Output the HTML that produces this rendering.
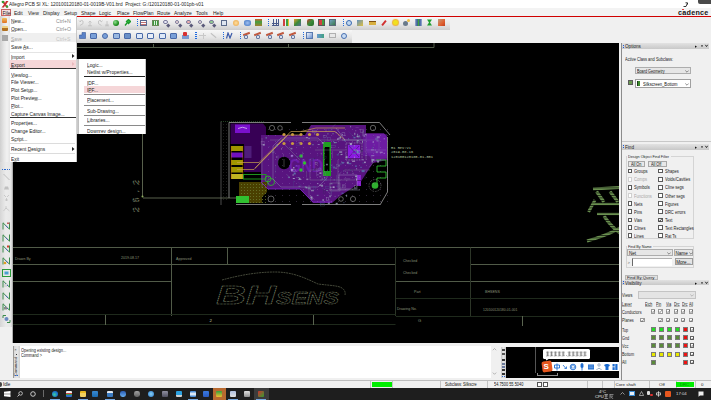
<!DOCTYPE html><html><head><meta charset="utf-8"><style>
*{margin:0;padding:0;box-sizing:border-box}
html,body{width:711px;height:400px;overflow:hidden;background:#f0f0f0;font-family:"Liberation Sans",sans-serif;color:#000;position:relative}
.a{position:absolute}
.t{position:absolute;white-space:nowrap;line-height:1}
svg{display:block}
u{text-decoration-color:rgba(0,0,0,.25);text-decoration-thickness:0.4px;text-underline-offset:0.2px}
.tb{background:linear-gradient(#f7f7f7,#e6e6e6 55%,#cdcdcd)}
</style></head><body><div class="a" style="left:0px;top:0px;width:711px;height:8px;background:#ffffff;"></div><div class="a" style="left:0px;top:8px;width:711px;height:8px;background:#f3f3f3;"></div><div class="a" style="left:0px;top:16px;width:711px;height:1px;background:#d00000;"></div><div class="a tb" style="left:0;top:17px;width:450px;height:12.6px"></div><div class="a tb" style="left:0;top:29.6px;width:352px;height:13px"></div><svg class="a" style="left:1px;top:0px" width="8" height="8" viewBox="0 0 8 8">
<path d="M0.5 1 L3 1 L4 3 L5 1 L7.5 1 L5 4.5 L7.5 7.5 L5 7.5 L4 5.5 L3 7.5 L0.5 7.5 L3 4.5Z" fill="#c83030"/>
<circle cx="2" cy="2" r="1.3" fill="#30a030"/><circle cx="6" cy="6.5" r="1.2" fill="#30a030"/></svg><div class="t" style="left:8.5px;top:1.7px;font-size:5.0px;color:#1a1a1a;transform:scaleX(0.95);transform-origin:0 0">Allegro PCB SI XL: 120100120180-01-0019B-V01.brd&nbsp; Project: G:/120120180-01-001pb-v01</div><div class="a" style="left:1px;top:9px;width:9.5px;height:6.6px;background:#f6dede;border:1px solid #c86464"></div><div class="t" style="left:2.5px;top:10.9px;font-size:5.0px;color:#1a1a1a;">File</div><div class="t" style="left:14px;top:10.9px;font-size:5.0px;color:#1a1a1a;">Edit</div><div class="t" style="left:28px;top:10.9px;font-size:5.0px;color:#1a1a1a;">View</div><div class="t" style="left:43px;top:10.9px;font-size:5.0px;color:#1a1a1a;">Display</div><div class="t" style="left:64px;top:10.9px;font-size:5.0px;color:#1a1a1a;">Setup</div><div class="t" style="left:81px;top:10.9px;font-size:5.0px;color:#1a1a1a;">Shape</div><div class="t" style="left:99px;top:10.9px;font-size:5.0px;color:#1a1a1a;">Logic</div><div class="t" style="left:117px;top:10.9px;font-size:5.0px;color:#1a1a1a;">Place</div><div class="t" style="left:133px;top:10.9px;font-size:5.0px;color:#1a1a1a;">FlowPlan</div><div class="t" style="left:157px;top:10.9px;font-size:5.0px;color:#1a1a1a;">Route</div><div class="t" style="left:174px;top:10.9px;font-size:5.0px;color:#1a1a1a;">Analyze</div><div class="t" style="left:196px;top:10.9px;font-size:5.0px;color:#1a1a1a;">Tools</div><div class="t" style="left:213px;top:10.9px;font-size:5.0px;color:#1a1a1a;">Help</div><div class="t" style="left:678px;top:9.3px;font-size:7.2px;color:#151515;font-weight:bold;letter-spacing:0.25px">cadence</div><div class="a" style="left:682.3px;top:9px;width:1.8px;height:0.9px;background:#e04040;"></div><svg class="a" style="left:683px;top:1.5px" width="5" height="5"><path d="M0.5 4.5 H3 L4.5 1 M2.5 0.8 H4.5 V2.5" stroke="#222" stroke-width="0.9" fill="none"/></svg><div class="a" style="left:698px;top:0px;width:13px;height:3.5px;background:#4a4a4a;border-radius:0 0 0 2px"></div><svg class="a" style="left:78px;top:19px" width="32" height="8" viewBox="0 0 32 8" fill="none" stroke="#bdbdbd" stroke-width="0.8"><path d="M2 6.5 Q6.5 5 5 2 Q3.5 0.5 2 2.5 M1 1.5 L2 2.8 L3.3 1.8"/><path d="M10 6.8 H14 M12 6.8 V3 M10.5 3.5 L12 2 L13.5 3.5"/><path d="M23.5 6.5 Q19 5 20.5 2 Q22 0.5 23.5 2.5 M24.5 1.5 L23.5 2.8 L22.2 1.8"/><path d="M27 6.8 H31 M29 6.8 V2 M27.5 5 L29 6.5 L30.5 5"/></svg><div class="a" style="left:112.5px;top:19.3px;width:7px;height:7px"><div class="a" style="left:0.5px;top:0.5px;width:6px;height:6px;border-radius:50%;background:radial-gradient(circle at 35% 35%,#8fe08f,#1f8f1f 60%,#0d5a0d)"></div></div><div class="a" style="left:123.5px;top:19.3px;width:7px;height:7px"><svg width="7" height="7" viewBox="0 0 7 7"><path d="M1 6.5 L3 4 M2.5 2.5 L4.5 0.5 L6.5 2.5 L4.5 4.5Z" stroke="#1a9a2a" stroke-width="1.3" fill="#2fb83f"/></svg></div><div class="a" style="left:137.0px;top:19px;width:1.4px;height:8px;background:repeating-linear-gradient(#1f6ae0 0 1.1px,transparent 1.1px 2px)"></div><div class="a" style="left:140.0px;top:19.3px;width:7px;height:7px"><div class="a" style="left:0;top:0.5px;width:7px;height:6px;border:1px solid #5a6a90;background:repeating-linear-gradient(#fff 0 1px,#c07070 1px 2px)"></div></div><div class="a" style="left:151.5px;top:19.3px;width:7px;height:7px"><div class="a" style="left:0;top:0.5px;width:7px;height:6px;border:1px solid #6a8a5a;background:repeating-linear-gradient(90deg,#3a9a3a 0 1px,#e0f0e0 1px 2px)"></div></div><div class="a" style="left:162.5px;top:19.3px;width:7px;height:7px"><div class="a" style="left:0.5px;top:0.5px;width:4.5px;height:4.5px;border-radius:50%;border:1.2px solid #7a7a9a;background:#e8e8f8"></div><div class="a" style="left:4.5px;top:4.5px;width:2.5px;height:2.5px;background:#5a5a7a;transform:rotate(45deg)"></div></div><div class="a" style="left:174.0px;top:19.3px;width:7px;height:7px"><div class="a" style="left:0.5px;top:0.5px;width:4.5px;height:4.5px;border-radius:50%;border:1.2px solid #7a7a9a;background:#f8e0e0"></div><div class="a" style="left:4.5px;top:4.5px;width:2.5px;height:2.5px;background:#5a5a7a;transform:rotate(45deg)"></div></div><div class="a" style="left:185.5px;top:19.3px;width:7px;height:7px"><div class="a" style="left:0.5px;top:0.5px;width:4.5px;height:4.5px;border-radius:50%;border:1.2px solid #7a7a9a;background:#f0b0b0"></div><div class="a" style="left:4.5px;top:4.5px;width:2.5px;height:2.5px;background:#5a5a7a;transform:rotate(45deg)"></div></div><div class="a" style="left:197.0px;top:19.3px;width:7px;height:7px"><div class="a" style="left:0.5px;top:0.5px;width:4.5px;height:4.5px;border-radius:50%;border:1.2px solid #7a7a9a;background:#f0e0e0"></div><div class="a" style="left:4.5px;top:4.5px;width:2.5px;height:2.5px;background:#5a5a7a;transform:rotate(45deg)"></div></div><div class="a" style="left:208.5px;top:19.3px;width:7px;height:7px"><div class="a" style="left:0.5px;top:0.5px;width:4.5px;height:4.5px;border-radius:50%;border:1.2px solid #7a7a9a;background:#90d090"></div><div class="a" style="left:4.5px;top:4.5px;width:2.5px;height:2.5px;background:#5a5a7a;transform:rotate(45deg)"></div></div><div class="a" style="left:220.0px;top:19.3px;width:7px;height:7px"><div class="a" style="left:0.5px;top:0.5px;width:6px;height:6px;border:1px solid #5a6a8a;background:#dfe6f0"></div></div><div class="a" style="left:232.0px;top:19.3px;width:7px;height:7px"><div class="a" style="left:0.5px;top:0.5px;width:6px;height:6px;border-radius:50%;background:radial-gradient(#ffe0a0,#e8a040)"></div></div><div class="a" style="left:243.5px;top:19.3px;width:7px;height:7px"><div class="a" style="left:0;top:0.5px;width:7px;height:6px;border-radius:40%;background:radial-gradient(#a0c0f0,#3a70c0)"></div></div><div class="a" style="left:255.0px;top:19.3px;width:7px;height:7px"><div class="a" style="left:0;top:0;width:7px;height:7px;background:linear-gradient(#d06030,#40a040 40%,#a08030)"></div></div><div class="a" style="left:267.7px;top:19px;width:1.4px;height:8px;background:repeating-linear-gradient(#1f6ae0 0 1.1px,transparent 1.1px 2px)"></div><div class="a" style="left:271.5px;top:19.3px;width:7px;height:7px"><div class="a" style="left:0;top:0;width:7px;height:7px;background:repeating-linear-gradient(90deg,transparent 0 1.5px,#4a5a8a 1.5px 2.3px),repeating-linear-gradient(transparent 0 1.5px,#4a5a8a 1.5px 2.3px)"></div></div><div class="a" style="left:282.5px;top:19.3px;width:7px;height:7px"><div class="a" style="left:0.5px;top:0;width:6px;height:7px;background:linear-gradient(90deg,#d04040 0 2px,#f0f0f0 2px 3px,#40a040 3px 5px,#e0c030 5px)"></div></div><div class="a" style="left:294.0px;top:19.3px;width:7px;height:7px"><div class="a" style="left:0;top:0;width:7px;height:7px;background:linear-gradient(135deg,#e0a030,#3a8a3a 50%,#5a6a9a)"></div></div><div class="a" style="left:306.5px;top:19.3px;width:7px;height:7px"><div class="a" style="left:0;top:0;width:7px;height:7px;border-radius:30%;background:linear-gradient(135deg,#c04030,#3a8a3a 50%,#2a6a2a)"></div></div><div class="a" style="left:317.5px;top:19.3px;width:7px;height:7px"><div class="a" style="left:0;top:0;width:7px;height:7px;border:1px solid #555;background:linear-gradient(90deg,#d04040 0 3px,#40a040 3px)"></div></div><div class="a" style="left:329.0px;top:19.3px;width:7px;height:7px"><div class="a" style="left:0;top:0;width:7px;height:7px;border:1px solid #5a6a7a;background:linear-gradient(135deg,#70a0c0,#3a7a4a)"></div></div><div class="a" style="left:342.7px;top:19px;width:1.4px;height:8px;background:repeating-linear-gradient(#1f6ae0 0 1.1px,transparent 1.1px 2px)"></div><div class="a" style="left:345.0px;top:19.3px;width:7px;height:7px"><div class="a" style="left:0.5px;top:0.5px;width:6px;height:6px;border-radius:50%;border:1px solid #3a6ab0;background:#c0d8f0"></div></div><div class="a" style="left:356.5px;top:19.3px;width:7px;height:7px"><div class="a" style="left:0;top:1px;width:6px;height:6px;background:linear-gradient(135deg,#6090c0,#e0c040)"></div></div><div class="a" style="left:368.5px;top:19.3px;width:7px;height:7px"><div class="a" style="left:0;top:2px;width:7px;height:4px;background:#d8b040;border-top:1px solid #805010"></div></div><div class="a" style="left:380.0px;top:19.3px;width:7px;height:7px"><div class="a" style="left:1px;top:3px;width:6px;height:2px;background:#d03030;transform:rotate(-50deg)"></div></div><div class="a" style="left:391.5px;top:19.3px;width:7px;height:7px"><div class="a" style="left:1px;top:1px;width:5px;height:5px;border-radius:50%;background:#f0e020;box-shadow:0 0 1px 1px #f0b030"></div></div><div class="a" style="left:402.5px;top:19.3px;width:7px;height:7px"><div class="a" style="left:0.5px;top:1.5px;width:5px;height:5px;border-radius:50%;background:#6a7a8a"></div><div class="a" style="left:4px;top:0;width:3px;height:3px;background:#f0c040;border-radius:50%"></div></div><div class="a" style="left:414.5px;top:19.3px;width:7px;height:7px"><div class="a" style="left:0;top:0;width:7px;height:7px;background:linear-gradient(90deg,#a0b0d0,#3a5aa0 30%,#40a040 50%,#3a5aa0 70%,#a0b0d0)"></div></div><div class="a" style="left:425.5px;top:19.3px;width:7px;height:7px"><svg width="7" height="7" viewBox="0 0 7 7"><path d="M1 0.5 H6 L4 3.5 L6 6.5 H1 L3 3.5Z" fill="#20a030"/></svg></div><div class="a" style="left:437.5px;top:19.3px;width:7px;height:7px"><div class="a" style="left:0;top:0;width:7px;height:7px;background:linear-gradient(135deg,#c0a080,#e06030 60%,#c04020)"></div></div><div class="a" style="left:78.5px;top:32.3px;width:7px;height:7px"><svg width="7" height="7" viewBox="0 0 7 7"><path d="M0.5 6.5 V3 H3 V0.5 H6.5 V6.5Z" fill="#5a82c8" stroke="#3a5a98" stroke-width="0.6"/></svg></div><div class="a" style="left:89.5px;top:32.3px;width:7px;height:7px"><div class="a" style="left:0;top:0.5px;width:7px;height:6px;border:1px solid #4a6aa8;border-radius:1px;background:#7aa0d8"></div></div><div class="a" style="left:101.0px;top:32.3px;width:7px;height:7px"><div class="a" style="left:0.5px;top:0.5px;width:6px;height:6px;border-radius:50%;background:#7aa0d8;border:1px solid #4a6aa8"></div></div><div class="a" style="left:112.5px;top:32.3px;width:7px;height:7px"><div class="a" style="left:0;top:0.5px;width:7px;height:6px;border:1px solid #4a6aa8;border-radius:1px;background:#9ab8e0"></div></div><div class="a" style="left:124.0px;top:32.3px;width:7px;height:7px"><div class="a" style="left:0;top:0.5px;width:7px;height:6px;border:1px solid #4a6aa8;border-radius:1px;background:#6a90c8"></div></div><div class="a" style="left:135.5px;top:32.3px;width:7px;height:7px"><div class="a" style="left:0;top:0.5px;width:7px;height:6px;border:1px solid #4a6aa8;border-radius:1px;background:#dde8f8"></div></div><div class="a" style="left:147.0px;top:32.3px;width:7px;height:7px"><div class="a" style="left:0;top:0.5px;width:7px;height:6px;border:1px solid #4a6aa8;border-radius:1px;background:#e8eef8"></div></div><div class="a" style="left:159.0px;top:32.3px;width:7px;height:7px"><div class="a" style="left:0;top:0.5px;width:7px;height:6px;border:1px solid #4a6aa8;border-radius:1px;background:#dde8f8"></div></div><div class="a" style="left:170.0px;top:32.3px;width:7px;height:7px"><div class="a" style="left:0;top:0.5px;width:7px;height:6px;border:1px solid #4a6aa8;border-radius:1px;background:#7aa0d8"></div></div><div class="a" style="left:181.5px;top:32.3px;width:7px;height:7px"><div class="a" style="left:0;top:3px;width:7px;height:4px;background:#7a9ad0"></div><div class="a" style="left:1.5px;top:0;width:4px;height:4px;background:#d83030;border-radius:1px"></div></div><div class="a" style="left:195.2px;top:32px;width:1.4px;height:8px;background:repeating-linear-gradient(#1f6ae0 0 1.1px,transparent 1.1px 2px)"></div><div class="a" style="left:198.5px;top:32.3px;width:7px;height:7px"><div class="a" style="left:0;top:3px;width:7px;height:1px;background:#c8c8c8"></div><div class="a" style="left:4px;top:0.5px;width:1px;height:6px;background:#c8c8c8"></div></div><div class="a" style="left:209.5px;top:32.3px;width:7px;height:7px"><div class="a" style="left:0;top:3px;width:7px;height:1px;background:#c0c0c0;transform:rotate(40deg)"></div></div><div class="a" style="left:223.1px;top:32px;width:1.4px;height:8px;background:repeating-linear-gradient(#1f6ae0 0 1.1px,transparent 1.1px 2px)"></div><div class="a" style="left:226.1px;top:32.3px;width:7px;height:7px"><svg width="7" height="7" viewBox="0 0 7 7"><path d="M0.5 6.5 L2 1 L4 6 L6 1" stroke="#3a5aa8" stroke-width="1.2" fill="none"/></svg></div><div class="a" style="left:239.89999999999998px;top:32px;width:1.4px;height:8px;background:repeating-linear-gradient(#1f6ae0 0 1.1px,transparent 1.1px 2px)"></div><div class="a" style="left:242.9px;top:32.3px;width:7px;height:7px"><div class="a" style="left:0;top:0.5px;width:7px;height:2px;background:#c05a40;transform:rotate(-20deg)"></div><div class="a" style="left:1.5px;top:2.5px;width:4px;height:4.5px;border:1px solid #6a7aa0;background:#d8e0f0;border-radius:1px"></div></div><div class="a" style="left:254.2px;top:32.3px;width:7px;height:7px"><div class="a" style="left:0;top:0.5px;width:7px;height:2px;background:#c05a40;transform:rotate(-20deg)"></div><div class="a" style="left:1.5px;top:2.5px;width:4px;height:4.5px;border:1px solid #6a7aa0;background:#d8e0f0;border-radius:1px"></div></div><div class="a" style="left:266.0px;top:32.3px;width:7px;height:7px"><div class="a" style="left:0;top:0.5px;width:7px;height:2px;background:#c05a40;transform:rotate(-20deg)"></div><div class="a" style="left:1.5px;top:2.5px;width:4px;height:4.5px;border:1px solid #6a7aa0;background:#d8e0f0;border-radius:1px"></div></div><div class="a" style="left:277.2px;top:32.3px;width:7px;height:7px"><div class="a" style="left:0;top:0.5px;width:7px;height:2px;background:#c05a40;transform:rotate(-20deg)"></div><div class="a" style="left:1.5px;top:2.5px;width:4px;height:4.5px;border:1px solid #6a7aa0;background:#d8e0f0;border-radius:1px"></div></div><div class="a" style="left:289.0px;top:32.3px;width:7px;height:7px"><div class="a" style="left:0;top:0.5px;width:7px;height:2px;background:#c05a40;transform:rotate(-20deg)"></div><div class="a" style="left:1.5px;top:2.5px;width:4px;height:4.5px;border:1px solid #6a7aa0;background:#d8e0f0;border-radius:1px"></div></div><div class="a" style="left:302.7px;top:32px;width:1.4px;height:8px;background:repeating-linear-gradient(#1f6ae0 0 1.1px,transparent 1.1px 2px)"></div><div class="a" style="left:306.0px;top:32.3px;width:7px;height:7px"><div class="a" style="left:0;top:0;width:7px;height:7px;border:1px solid #5a7ab0;background:linear-gradient(135deg,#f0f4fa,#6a90d0)"></div></div><div class="a" style="left:317.0px;top:32.3px;width:7px;height:7px"><div class="a" style="left:0;top:1.5px;width:7px;height:4px;background:linear-gradient(90deg,#6a9ad0,#40a080)"></div></div><div class="a" style="left:328.5px;top:32.3px;width:7px;height:7px"><div class="a" style="left:0;top:1px;width:7px;height:5px;border:1px solid #b0b0b0;background:#e8e8e8"></div></div><div class="a" style="left:340.0px;top:32.3px;width:7px;height:7px"><div class="a" style="left:0.5px;top:0.5px;width:6px;height:6px;border-radius:50%;border:1px solid #4a70b0;background:#c8dcf4"></div></div><div class="a" style="left:13px;top:43px;width:606px;height:300px;background:#000;"></div><div class="a" style="left:0;top:43px;width:13px;height:284px;background:linear-gradient(90deg,#d6d6d6,#ebebeb 45%,#e8e8e8 80%,#c4c4c4)"></div><div class="a" style="left:12.4px;top:43px;width:0.8px;height:300px;background:#b0b0b0;"></div><div class="a" style="left:2px;top:169px;width:8.5px;height:0.9px;background:repeating-linear-gradient(90deg,#2a6ad0 0 0.9px,transparent 0.9px 1.7px);"></div><svg class="a" style="left:2px;top:173px" width="9" height="40" viewBox="0 0 9 40"><path d="M1.5 1 L7.5 7" stroke="#b8b8b8" stroke-width="0.9"/><path d="M2 16.5 H7 L6 13.5 H3Z" fill="#c0c0c0"/><path d="M2 22 L4 24 M5 24 L7 22 M4.5 25 V28 M3 27 H6" stroke="#c0c0c0" stroke-width="0.8"/><path d="M1.5 38 L4 35 L7.5 38 M4 33 V36" stroke="#c4c4c4" stroke-width="0.8" fill="none"/></svg><div class="a" style="left:2px;top:219.5px;width:8.5px;height:0.9px;background:repeating-linear-gradient(90deg,#2a6ad0 0 0.9px,transparent 0.9px 1.7px);"></div><svg class="a" style="left:2px;top:222px" width="9" height="8" viewBox="0 0 9 8"><path d="M1 7.5 V0.8 L7.5 7.2 V0.5" stroke="#3a8a4a" stroke-width="1" fill="none"/><path d="M3.5 3.5 L6 6" stroke="#4a6ab0" stroke-width="1"/><rect x="5" y="0.5" width="2.5" height="1.5" fill="#c06060"/></svg><svg class="a" style="left:2px;top:233.5px" width="9" height="8" viewBox="0 0 9 8"><path d="M1 7.5 V0.8 L7.5 7.2 V0.5" stroke="#3a8a4a" stroke-width="1" fill="none"/><path d="M3.5 3.5 L6 6" stroke="#4a6ab0" stroke-width="1"/></svg><svg class="a" style="left:2px;top:245.4px" width="9" height="8" viewBox="0 0 9 8"><path d="M1 7.5 V0.8 L7.5 7.2 V0.5" stroke="#3a8a4a" stroke-width="1" fill="none"/><path d="M3.5 3.5 L6 6" stroke="#4a6ab0" stroke-width="1"/><rect x="5" y="0.5" width="2" height="2" fill="#d04030"/></svg><svg class="a" style="left:2px;top:256.6px" width="9" height="8" viewBox="0 0 9 8"><path d="M1 7.5 V0.8 L7.5 7.2 V0.5" stroke="#3a8a4a" stroke-width="1" fill="none"/><path d="M3.5 3.5 L6 6" stroke="#4a6ab0" stroke-width="1"/><circle cx="3" cy="6" r="1.3" fill="#e0a020"/></svg><svg class="a" style="left:2px;top:268.5px" width="9" height="8" viewBox="0 0 9 8"><rect x="0.5" y="0.5" width="8" height="7" fill="none" stroke="#2a9a3a" stroke-width="1"/><rect x="2.5" y="2.5" width="4" height="3" fill="#4aa0d0"/></svg><svg class="a" style="left:2px;top:279.75px" width="9" height="8" viewBox="0 0 9 8"><path d="M1 7.5 V0.8 L7.5 7.2 V0.5" stroke="#3a8a4a" stroke-width="1" fill="none"/><path d="M3.5 3.5 L6 6" stroke="#4a6ab0" stroke-width="1"/><rect x="2" y="4" width="3" height="3" fill="#d8d8d8"/></svg><svg class="a" style="left:2px;top:291.6px" width="9" height="8" viewBox="0 0 9 8"><path d="M1 7.5 V0.8 L7.5 7.2 V0.5" stroke="#3a8a4a" stroke-width="1" fill="none"/><path d="M3.5 3.5 L6 6" stroke="#4a6ab0" stroke-width="1"/></svg><svg class="a" style="left:2px;top:302.9px" width="9" height="8" viewBox="0 0 9 8"><path d="M1 7.5 V0.8 L7.5 7.2 V0.5" stroke="#3a8a4a" stroke-width="1" fill="none"/><path d="M3.5 3.5 L6 6" stroke="#4a6ab0" stroke-width="1"/><rect x="2" y="4" width="3" height="2.5" fill="#8a8a8a"/></svg><svg class="a" style="left:2px;top:314.5px" width="9" height="8" viewBox="0 0 9 8"><path d="M1 0.5 H4 M1 0.5 V3 M8 7.5 H5 M8 7.5 V5" stroke="#3a8a4a" stroke-width="1" fill="none"/><circle cx="4.5" cy="4" r="2" fill="#6a8ac0"/></svg><svg class="a" style="left:13px;top:43px" width="606" height="300" viewBox="13 43 606 300"><defs><pattern id="dots" width="3" height="3" patternUnits="userSpaceOnUse"><rect x="1" y="1" width="0.7" height="0.7" fill="#3a3a3a"/></pattern><pattern id="dots2" width="3" height="3" patternUnits="userSpaceOnUse"><rect x="1" y="1" width="0.9" height="0.9" fill="#6a7a30"/></pattern><pattern id="vias" width="7" height="6" patternUnits="userSpaceOnUse"><rect x="2" y="3" width="0.7" height="0.7" fill="#a080c0" opacity="0.6"/></pattern><pattern id="stripe" width="3" height="2.5" patternUnits="userSpaceOnUse"><rect width="3" height="0.8" fill="#000" opacity="0.75"/></pattern></defs><line x1="13" y1="47.5" x2="434" y2="47.5" stroke="#515b48" stroke-width="1"/><line x1="153.5" y1="44" x2="153.5" y2="47.5" stroke="#515b48" stroke-width="1"/><line x1="288.5" y1="44" x2="288.5" y2="47.5" stroke="#515b48" stroke-width="1"/><line x1="434" y1="43" x2="434" y2="47.5" stroke="#515b48" stroke-width="1"/><line x1="13" y1="247.5" x2="619" y2="247.5" stroke="#515b48" stroke-width="1"/><line x1="13" y1="264.5" x2="395.5" y2="264.5" stroke="#515b48" stroke-width="1"/><line x1="470.5" y1="264.5" x2="619" y2="264.5" stroke="#515b48" stroke-width="1"/><line x1="13" y1="281.5" x2="171.5" y2="281.5" stroke="#515b48" stroke-width="1"/><line x1="396" y1="281.5" x2="619" y2="281.5" stroke="#515b48" stroke-width="1"/><line x1="171.5" y1="247.5" x2="171.5" y2="316" stroke="#515b48" stroke-width="1"/><line x1="227.5" y1="247.5" x2="227.5" y2="264.5" stroke="#515b48" stroke-width="1"/><line x1="395.5" y1="247.5" x2="395.5" y2="316" stroke="#2c3527" stroke-width="1"/><line x1="470.5" y1="247.5" x2="470.5" y2="316" stroke="#2c3527" stroke-width="1"/><line x1="13" y1="314.5" x2="395.5" y2="314.5" stroke="#1f2a1c" stroke-width="1"/><line x1="13" y1="324.5" x2="395.5" y2="324.5" stroke="#1f2a1c" stroke-width="1"/><line x1="396" y1="298.5" x2="619" y2="298.5" stroke="#1f2a1c" stroke-width="1"/><line x1="396" y1="316.5" x2="619" y2="316.5" stroke="#1f2a1c" stroke-width="1"/><line x1="105.5" y1="315" x2="105.5" y2="325" stroke="#5a6450" stroke-width="1"/><line x1="313.5" y1="315" x2="313.5" y2="325" stroke="#5a6450" stroke-width="1"/><line x1="522.5" y1="316" x2="522.5" y2="326" stroke="#5a6450" stroke-width="1"/><line x1="142.5" y1="133" x2="142.5" y2="196.5" stroke="#58604c" stroke-width="1"/><line x1="143" y1="198" x2="240" y2="198" stroke="#58604c" stroke-width="1"/><circle cx="142.5" cy="196.5" r="1" fill="#90b060"/><text x="0" y="0" transform="translate(138.5,212) rotate(-90)" font-family="Liberation Sans" font-size="8.5" fill="none" stroke="#7e8a6c" stroke-width="0.5" stroke-dasharray="2 1" textLength="32" lengthAdjust="spacing">25.2</text><text x="15" y="260" font-family="Liberation Sans" font-size="3.6" fill="#8a9478">Drawn By</text><text x="121" y="258.5" font-family="Liberation Sans" font-size="3.6" fill="#8a9478">2019.08.17</text><text x="176" y="260" font-family="Liberation Sans" font-size="3.6" fill="#8a9478">Approved</text><text x="209.5" y="322" font-family="Liberation Sans" font-size="4.4" fill="#c0c4b0">2</text><text x="403" y="261.5" font-family="Liberation Sans" font-size="3.6" fill="#8a9478">Checked</text><text x="403" y="274" font-family="Liberation Sans" font-size="3.6" fill="#8a9478">Checked</text><text x="414" y="293" font-family="Liberation Sans" font-size="3.6" fill="#8a9478">Part</text><text x="397" y="310" font-family="Liberation Sans" font-size="3.6" fill="#8a9478">Drawing No.</text><text x="485" y="293" font-family="Liberation Sans" font-size="3.6" fill="#8a9478">BHSENS</text><text x="483" y="311" font-family="Liberation Sans" font-size="3.4" fill="#8a9478">120100120180-01-001</text><text x="418" y="322" font-family="Liberation Sans" font-size="4.2" fill="#8a9478">G</text><text x="216" y="304" font-family="Liberation Sans" font-style="italic" font-weight="bold" font-size="26" fill="none" stroke="#7c8468" stroke-width="0.5" stroke-dasharray="1.6 0.5" textLength="60" lengthAdjust="spacingAndGlyphs">BH</text><text x="276" y="304" font-family="Liberation Sans" font-style="italic" font-weight="bold" font-size="16" fill="none" stroke="#7c8468" stroke-width="0.5" stroke-dasharray="1.6 0.5" textLength="63" lengthAdjust="spacingAndGlyphs">SENS</text><path d="M222 280 C240 275 258 272 275 272 C293 272 305 278 318 284 C330 285.5 338 285.5 342 288 Q346 291 345 295" fill="none" stroke="#7c8468" stroke-width="0.55" stroke-dasharray="2 0.7"/><g stroke="#6a9050" fill="none" stroke-linecap="butt"><path d="M593 189 L620 187.5" stroke-width="3"/><path d="M596.5 191.5 L604 202" stroke-width="3.2"/><path d="M610 191.5 L618 202" stroke-width="3.2"/><path d="M592 204 H620" stroke-width="2.4"/><path d="M595 200 L588.5 212" stroke-width="3"/><path d="M597 214 H620" stroke-width="2.4"/><path d="M604 216 C608 222 613 228 620 233" stroke-width="3.2"/><path d="M620 228 C610 234 598 238 587 241" stroke-width="3"/></g><rect x="584" y="186" width="35" height="56" fill="url(#stripe)"/><g stroke="#8a8a8a" stroke-width="0.9" fill="none"><path d="M221 121.5 V205" stroke="#6a6a6a" stroke-width="0.7"/><path d="M229 122.5 V198"/><path d="M229 122.5 H291"/><path d="M302 122.5 H379.5 L390 135"/><path d="M387.5 137 V192 L380 205"/><path d="M236 204.5 H291"/><path d="M302 204.5 H380"/></g><path d="M221 121.5 H264" stroke="#2f5a2f" stroke-width="0.7" stroke-dasharray="1 1"/><rect x="222.5" y="124" width="6" height="78" fill="url(#dots)"/><path d="M230.5 123.5 H263 L266 127 V135 H261 V172 H244 V144 H230.5Z" fill="#370055"/><rect x="235" y="124.5" width="15" height="8.5" fill="#7a10cc"/><path d="M238 128.5 Q242.5 126 247 128.5" stroke="#d8c0f0" stroke-width="0.8" fill="none"/><rect x="231" y="146" width="12" height="5" fill="#a09600"/><rect x="231" y="152.5" width="12" height="5" fill="#7010c0"/><rect x="231" y="160" width="12" height="5" fill="#a09600"/><rect x="231" y="167" width="12" height="5.5" fill="#a09600"/><rect x="231" y="174" width="12" height="5" fill="#c0b420"/><path d="M231.3 146 V179 M242.8 146 V179" stroke="#c06010" stroke-width="0.5"/><rect x="244.5" y="146" width="7" height="12" fill="#5a2a8a" opacity="0.7"/><path d="M261 135 H305 L311 125 H366 V133.5 H384 L387 137 V160 L373 163 L360 183 L340 196 L332 203 H313 L300 189 H268 L261 182Z" fill="#58147f"/><path d="M366 133.5 H384 L387 137 V158 L372 161 L366 150Z" fill="#6a1a9a"/><path d="M239 182 H267 V192 L262 197 V203 H239Z" fill="#4a4000"/><rect x="240" y="184" width="26" height="19" fill="url(#dots2)"/><rect x="236" y="196" width="13" height="7" fill="#30c030"/><rect x="243.5" y="174.5" width="22.5" height="4.5" fill="none" stroke="#20a020" stroke-width="0.9"/><g stroke="#30b030" stroke-width="0.9" fill="none"><circle cx="268" cy="179" r="3"/><circle cx="271" cy="182" r="3.5"/></g><g stroke="#c8a050" stroke-width="0.7" fill="none"><path d="M237 162.5 H259 L283 139 L291 131.5 H335 L345 140"/><path d="M237 169.5 H254 L281 142 L288 135 H300"/><path d="M255 168 L285 138"/><path d="M301 131.5 L316 128 H345"/></g><g fill="#c89a40"><circle cx="284" cy="134.5" r="1.6"/><circle cx="292.5" cy="134.5" r="1.6"/><circle cx="301" cy="134.5" r="1.6"/><circle cx="309.5" cy="134.5" r="1.6"/><circle cx="317.5" cy="134.5" r="1.6"/><circle cx="284" cy="143.5" r="1.6"/><circle cx="292.5" cy="143.5" r="1.6"/><circle cx="301" cy="143.5" r="1.6"/><circle cx="309.5" cy="143.5" r="1.6"/></g><text x="289" y="172" font-family="Liberation Sans" font-weight="bold" font-size="19" fill="#6c1ea8" textLength="34" lengthAdjust="spacingAndGlyphs">GND</text><path d="M281 138 H318 L327 147 V178 L318 187 H281 L273 179 V146Z" fill="none" stroke="#8a7ab0" stroke-width="0.5"/><circle cx="284" cy="163" r="6.2" fill="#000"/><path d="M284 159 V167" stroke="#777" stroke-width="0.5"/><g stroke="#9a9a9a" stroke-width="0.6" fill="none"><circle cx="272" cy="128" r="2.6"/><circle cx="280" cy="128" r="2.3"/><circle cx="373" cy="128" r="2.7"/><circle cx="341" cy="199" r="2.3"/><circle cx="353" cy="199" r="2.6"/><circle cx="271" cy="199" r="3"/></g><rect x="323" y="142" width="8" height="34" fill="#20a020"/><rect x="324.5" y="147" width="5" height="24" fill="#000"/><g fill="#30c030"><circle cx="301" cy="156" r="1.7"/><circle cx="304.5" cy="163" r="1.7"/><circle cx="301" cy="170" r="1.7"/></g><g fill="#a070d0"><circle cx="292" cy="156" r="1.3"/><circle cx="292" cy="170" r="1.3"/></g><rect x="348" y="145" width="12" height="13" fill="#8a1ae0"/><path d="M349 146 L359 157 M359 146 L349 157" stroke="#5a0a90" stroke-width="0.8"/><rect x="346" y="143" width="16" height="17" fill="none" stroke="#9080b0" stroke-width="0.8" stroke-dasharray="0.8 0.8"/><g fill="#8a20d0"><rect x="357" y="175" width="4" height="5"/><rect x="357" y="181" width="4" height="5"/></g><path d="M376 160 H386 V166 H377 V172 H386 V178 H377 V185" stroke="#30c030" stroke-width="0.9" fill="none"/><circle cx="375" cy="185.5" r="3.3" fill="#30b030"/><circle cx="375" cy="185.5" r="6" fill="none" stroke="#c0c0c0" stroke-width="0.5" stroke-dasharray="0.7 1"/><g stroke="#8890a0" stroke-width="0.45" fill="none" opacity="0.8"><path d="M262 138 V188 M270 140 H365 M315 150 H345 M338 160 V190 M344 170 H370 M320 180 H355 M309 185 V198"/><rect x="310" y="170" width="12" height="10"/><rect x="330" y="183" width="10" height="8"/><rect x="365" y="140" width="14" height="12"/><path d="M366 133.5 V160 M300 160 L285 145"/></g><rect x="348.1" y="138.3" width="1" height="1" fill="#5a7ab0" opacity="0.8"/><rect x="335.3" y="167.6" width="1.5" height="1" fill="#9aa0b8" opacity="0.8"/><rect x="354.3" y="132.8" width="1" height="2" fill="#a0b0c0" opacity="0.8"/><rect x="333.3" y="166.5" width="1.5" height="2" fill="#5a7ab0" opacity="0.8"/><rect x="332.6" y="186.4" width="2" height="1.5" fill="#c0c8d8" opacity="0.8"/><rect x="360.3" y="166.8" width="1.5" height="1" fill="#5a7ab0" opacity="0.8"/><rect x="362.0" y="140.8" width="1" height="2" fill="#9aa0b8" opacity="0.8"/><rect x="361.6" y="170.1" width="3" height="2" fill="#5a7ab0" opacity="0.8"/><rect x="353.9" y="149.4" width="3" height="1.5" fill="#7a88a8" opacity="0.8"/><rect x="343.9" y="140.2" width="1.5" height="1" fill="#5a7ab0" opacity="0.8"/><rect x="346.8" y="161.7" width="2" height="2" fill="#a0b0c0" opacity="0.8"/><rect x="346.1" y="194.7" width="1" height="2" fill="#a0b0c0" opacity="0.8"/><rect x="339.2" y="151.3" width="3" height="1.5" fill="#9aa0b8" opacity="0.8"/><rect x="375.8" y="151.1" width="2" height="2" fill="#a0b0c0" opacity="0.8"/><rect x="362.5" y="159.0" width="1" height="1.5" fill="#a0b0c0" opacity="0.8"/><rect x="370.9" y="149.1" width="3" height="1.5" fill="#a0b0c0" opacity="0.8"/><rect x="379.7" y="151.6" width="3" height="1.5" fill="#c0c8d8" opacity="0.8"/><rect x="364.2" y="161.6" width="1.5" height="1.5" fill="#c0c8d8" opacity="0.8"/><rect x="371.3" y="155.1" width="3" height="1" fill="#c0c8d8" opacity="0.8"/><rect x="355.2" y="165.4" width="1.5" height="1.5" fill="#5a7ab0" opacity="0.8"/><rect x="345.6" y="156.2" width="2" height="2" fill="#a0b0c0" opacity="0.8"/><rect x="383.6" y="138.3" width="1.5" height="1" fill="#c0c8d8" opacity="0.8"/><rect x="376.5" y="140.4" width="2" height="1" fill="#c0c8d8" opacity="0.8"/><rect x="353.5" y="153.1" width="2" height="1" fill="#5a7ab0" opacity="0.8"/><rect x="371.4" y="159.1" width="3" height="1.5" fill="#a0b0c0" opacity="0.8"/><rect x="352.1" y="160.7" width="3" height="1" fill="#c0c8d8" opacity="0.8"/><rect x="333.8" y="142.2" width="1.5" height="1" fill="#7a88a8" opacity="0.8"/><rect x="363.6" y="135.0" width="1.5" height="2" fill="#9aa0b8" opacity="0.8"/><rect x="333.9" y="142.1" width="3" height="1" fill="#7a88a8" opacity="0.8"/><rect x="356.6" y="135.8" width="3" height="1.5" fill="#a0b0c0" opacity="0.8"/><rect x="357.1" y="133.8" width="1" height="2" fill="#7a88a8" opacity="0.8"/><rect x="371.5" y="160.5" width="1.5" height="2" fill="#9aa0b8" opacity="0.8"/><rect x="341.5" y="192.7" width="2" height="1" fill="#5a7ab0" opacity="0.8"/><rect x="346.7" y="171.7" width="1" height="2" fill="#7a88a8" opacity="0.8"/><rect x="349.9" y="143.1" width="2" height="2" fill="#c0c8d8" opacity="0.8"/><rect x="372.5" y="141.3" width="1.5" height="1.5" fill="#c0c8d8" opacity="0.8"/><rect x="341.2" y="161.5" width="1" height="1" fill="#7a88a8" opacity="0.8"/><rect x="356.4" y="141.2" width="2" height="1.5" fill="#7a88a8" opacity="0.8"/><rect x="383.5" y="152.8" width="1.5" height="1" fill="#c0c8d8" opacity="0.8"/><rect x="356.3" y="151.0" width="3" height="2" fill="#5a7ab0" opacity="0.8"/><rect x="377.1" y="160.6" width="2" height="2" fill="#9aa0b8" opacity="0.8"/><rect x="376.7" y="136.2" width="3" height="2" fill="#c0c8d8" opacity="0.8"/><rect x="356.8" y="140.1" width="2" height="1" fill="#a0b0c0" opacity="0.8"/><rect x="355.9" y="178.5" width="1" height="2" fill="#c0c8d8" opacity="0.8"/><rect x="339.5" y="136.6" width="1.5" height="2" fill="#a0b0c0" opacity="0.8"/><rect x="375.2" y="137.9" width="3" height="2" fill="#7a88a8" opacity="0.8"/><rect x="338.7" y="165.3" width="1" height="1" fill="#9aa0b8" opacity="0.8"/><rect x="354.3" y="187.3" width="1.5" height="1" fill="#7a88a8" opacity="0.8"/><rect x="341.9" y="162.1" width="2" height="1.5" fill="#5a7ab0" opacity="0.8"/><rect x="353.5" y="136.9" width="2" height="1.5" fill="#5a7ab0" opacity="0.8"/><rect x="337.3" y="138.3" width="1" height="1.5" fill="#c0c8d8" opacity="0.8"/><rect x="338.4" y="137.6" width="1" height="2" fill="#9aa0b8" opacity="0.8"/><rect x="348.3" y="163.2" width="3" height="1" fill="#5a7ab0" opacity="0.8"/><rect x="333.2" y="141.0" width="1" height="1" fill="#5a7ab0" opacity="0.8"/><rect x="294.4" y="172.8" width="1" height="1.5" fill="#7a88a8" opacity="0.7"/><rect x="304.8" y="186.2" width="1.5" height="2" fill="#7a88a8" opacity="0.7"/><rect x="310.4" y="196.5" width="2" height="2" fill="#c0c8d8" opacity="0.7"/><rect x="319.6" y="175.8" width="1" height="1.5" fill="#a0b0c0" opacity="0.7"/><rect x="292.8" y="178.0" width="2" height="1" fill="#c0c8d8" opacity="0.7"/><rect x="326.1" y="190.0" width="2" height="1" fill="#7a88a8" opacity="0.7"/><rect x="322.4" y="199.1" width="1.5" height="2" fill="#9aa0b8" opacity="0.7"/><rect x="329.3" y="195.3" width="1.5" height="2" fill="#a0b0c0" opacity="0.7"/><rect x="329.6" y="183.3" width="3" height="1" fill="#7a88a8" opacity="0.7"/><rect x="293.6" y="172.5" width="2" height="2" fill="#5a7ab0" opacity="0.7"/><rect x="323.9" y="177.1" width="1.5" height="1.5" fill="#7a88a8" opacity="0.7"/><rect x="298.5" y="185.8" width="2" height="1" fill="#7a88a8" opacity="0.7"/><rect x="292.6" y="174.0" width="1" height="2" fill="#9aa0b8" opacity="0.7"/><rect x="317.1" y="174.3" width="1.5" height="1" fill="#7a88a8" opacity="0.7"/><rect x="321.1" y="184.7" width="2" height="2" fill="#a0b0c0" opacity="0.7"/><rect x="325.2" y="179.5" width="1.5" height="1" fill="#5a7ab0" opacity="0.7"/><rect x="311.1" y="198.3" width="1.5" height="1.5" fill="#9aa0b8" opacity="0.7"/><rect x="305.9" y="186.9" width="1.5" height="1.5" fill="#a0b0c0" opacity="0.7"/><rect x="297.5" y="177.0" width="2" height="1" fill="#7a88a8" opacity="0.7"/><rect x="298.4" y="178.9" width="3" height="1" fill="#a0b0c0" opacity="0.7"/><rect x="307.7" y="187.3" width="3" height="2" fill="#7a88a8" opacity="0.7"/><rect x="310.9" y="189.8" width="3" height="1.5" fill="#9aa0b8" opacity="0.7"/><rect x="319.4" y="172.4" width="2" height="1.5" fill="#c0c8d8" opacity="0.7"/><g stroke="#a8a8c8" stroke-width="0.45" fill="none" opacity="0.9"><rect x="339" y="175" width="18" height="14"/><path d="M330 190 H360 M342 140 H366 M336 128 L345 140 M366 150 H386"/></g><rect x="363" y="134" width="24" height="22" fill="#7020b0" opacity="0.45"/><rect x="318.0" y="168.7" width="3" height="2" fill="none" stroke="#9a8ab8" stroke-width="0.4" opacity="0.7"/><rect x="340.4" y="186.9" width="1" height="0.8" fill="#6a78a0" opacity="0.75"/><line x1="328.9" y1="194.4" x2="335.1" y2="188.2" stroke="#4a5a90" stroke-width="0.4" opacity="0.7"/><rect x="343.4" y="173.0" width="0.8" height="0.8" fill="#8c90b0" opacity="0.75"/><rect x="336.6" y="185.7" width="1" height="1.5" fill="#4a5a90" opacity="0.75"/><rect x="290.4" y="147.9" width="2" height="1.5" fill="#8c90b0" opacity="0.75"/><rect x="350.2" y="149.6" width="0.8" height="0.8" fill="#6a78a0" opacity="0.75"/><rect x="332.0" y="133.4" width="2" height="0.8" fill="#6a78a0" opacity="0.75"/><rect x="261.1" y="141.4" width="3" height="3" fill="none" stroke="#9a8ab8" stroke-width="0.4" opacity="0.7"/><rect x="313.9" y="169.2" width="1.5" height="1" fill="#3a2a60" opacity="0.75"/><rect x="272.0" y="150.9" width="2" height="2" fill="none" stroke="#8c90b0" stroke-width="0.4" opacity="0.7"/><rect x="350.1" y="125.9" width="1" height="1.5" fill="#9a8ab8" opacity="0.75"/><rect x="331.5" y="159.9" width="1" height="1" fill="#3a2a60" opacity="0.75"/><rect x="342.1" y="134.1" width="0.8" height="1" fill="#a8b0c8" opacity="0.75"/><rect x="335.7" y="202.8" width="2" height="1.5" fill="#a8b0c8" opacity="0.75"/><rect x="341.9" y="132.8" width="3" height="3" fill="none" stroke="#a8b0c8" stroke-width="0.4" opacity="0.7"/><rect x="365.6" y="155.1" width="1" height="0.8" fill="#a8b0c8" opacity="0.75"/><rect x="336.8" y="154.0" width="2" height="1.5" fill="#4a5a90" opacity="0.75"/><line x1="278.1" y1="155.1" x2="278.1" y2="163.6" stroke="#6a78a0" stroke-width="0.4" opacity="0.7"/><line x1="352.4" y1="137.4" x2="355.3" y2="134.4" stroke="#4a5a90" stroke-width="0.4" opacity="0.7"/><rect x="314.1" y="133.1" width="1" height="1.5" fill="#6a78a0" opacity="0.75"/><rect x="349.8" y="145.0" width="3" height="3" fill="none" stroke="#4a5a90" stroke-width="0.4" opacity="0.7"/><rect x="326.5" y="197.5" width="2" height="3" fill="none" stroke="#a8b0c8" stroke-width="0.4" opacity="0.7"/><line x1="331.5" y1="191.5" x2="331.5" y2="195.8" stroke="#6a78a0" stroke-width="0.4" opacity="0.7"/><rect x="355.4" y="130.4" width="0.8" height="0.8" fill="#a8b0c8" opacity="0.75"/><line x1="283.2" y1="153.8" x2="283.2" y2="157.3" stroke="#a8b0c8" stroke-width="0.4" opacity="0.7"/><line x1="343.8" y1="178.9" x2="350.3" y2="178.9" stroke="#a8b0c8" stroke-width="0.4" opacity="0.7"/><rect x="320.8" y="152.9" width="0.8" height="1.5" fill="#8c90b0" opacity="0.75"/><line x1="341.2" y1="162.6" x2="345.0" y2="162.6" stroke="#6a78a0" stroke-width="0.4" opacity="0.7"/><line x1="353.9" y1="179.9" x2="357.5" y2="176.3" stroke="#6a78a0" stroke-width="0.4" opacity="0.7"/><rect x="313.6" y="186.7" width="2" height="3" fill="none" stroke="#4a5a90" stroke-width="0.4" opacity="0.7"/><rect x="275.6" y="145.1" width="2" height="1.5" fill="#6a78a0" opacity="0.75"/><rect x="348.5" y="160.7" width="0.8" height="1.5" fill="#4a5a90" opacity="0.75"/><line x1="355.5" y1="127.3" x2="358.7" y2="127.3" stroke="#9a8ab8" stroke-width="0.4" opacity="0.7"/><rect x="323.7" y="172.9" width="2" height="3" fill="none" stroke="#6a78a0" stroke-width="0.4" opacity="0.7"/><rect x="298.9" y="177.9" width="1.5" height="1.5" fill="#a8b0c8" opacity="0.75"/><rect x="291.4" y="156.6" width="2" height="0.8" fill="#3a2a60" opacity="0.75"/><line x1="371.9" y1="155.0" x2="371.9" y2="159.2" stroke="#6a78a0" stroke-width="0.4" opacity="0.7"/><rect x="323.6" y="190.3" width="2" height="3" fill="none" stroke="#3a2a60" stroke-width="0.4" opacity="0.7"/><rect x="364.6" y="133.8" width="2" height="1" fill="#a8b0c8" opacity="0.75"/><rect x="339.8" y="163.5" width="2" height="1" fill="#4a5a90" opacity="0.75"/><rect x="350.3" y="169.5" width="0.8" height="1.5" fill="#4a5a90" opacity="0.75"/><rect x="290.9" y="136.0" width="0.8" height="1" fill="#3a2a60" opacity="0.75"/><rect x="341.6" y="153.8" width="1" height="1" fill="#a8b0c8" opacity="0.75"/><line x1="293.3" y1="180.7" x2="293.3" y2="188.0" stroke="#4a5a90" stroke-width="0.4" opacity="0.7"/><line x1="329.0" y1="198.9" x2="329.0" y2="204.2" stroke="#a8b0c8" stroke-width="0.4" opacity="0.7"/><rect x="352.0" y="135.1" width="0.8" height="1" fill="#3a2a60" opacity="0.75"/><line x1="330.3" y1="175.9" x2="330.3" y2="181.7" stroke="#6a78a0" stroke-width="0.4" opacity="0.7"/><rect x="276.6" y="143.9" width="1.5" height="1.5" fill="#8c90b0" opacity="0.75"/><rect x="294.0" y="181.0" width="0.8" height="0.8" fill="#4a5a90" opacity="0.75"/><line x1="316.6" y1="167.9" x2="316.6" y2="176.4" stroke="#9a8ab8" stroke-width="0.4" opacity="0.7"/><line x1="363.0" y1="130.0" x2="363.0" y2="136.2" stroke="#a8b0c8" stroke-width="0.4" opacity="0.7"/><rect x="320.3" y="203.0" width="4" height="3" fill="none" stroke="#4a5a90" stroke-width="0.4" opacity="0.7"/><line x1="297.6" y1="181.8" x2="301.8" y2="186.1" stroke="#4a5a90" stroke-width="0.4" opacity="0.7"/><rect x="300.3" y="154.7" width="2" height="3" fill="none" stroke="#4a5a90" stroke-width="0.4" opacity="0.7"/><rect x="327.1" y="169.7" width="0.8" height="1.5" fill="#4a5a90" opacity="0.75"/><rect x="328.8" y="128.4" width="4" height="2" fill="none" stroke="#4a5a90" stroke-width="0.4" opacity="0.7"/><rect x="322.9" y="178.9" width="2" height="1" fill="#4a5a90" opacity="0.75"/><rect x="311.9" y="144.2" width="2" height="1" fill="#6a78a0" opacity="0.75"/><rect x="327.1" y="133.5" width="1.5" height="0.8" fill="#8c90b0" opacity="0.75"/><rect x="265.5" y="137.1" width="1.5" height="1.5" fill="#6a78a0" opacity="0.75"/><rect x="305.8" y="173.3" width="0.8" height="1.5" fill="#3a2a60" opacity="0.75"/><line x1="339.6" y1="181.0" x2="341.8" y2="178.8" stroke="#9a8ab8" stroke-width="0.4" opacity="0.7"/><line x1="365.0" y1="173.0" x2="365.0" y2="179.2" stroke="#3a2a60" stroke-width="0.4" opacity="0.7"/><line x1="327.7" y1="191.4" x2="330.8" y2="194.5" stroke="#a8b0c8" stroke-width="0.4" opacity="0.7"/><rect x="374.7" y="149.6" width="1" height="0.8" fill="#a8b0c8" opacity="0.75"/><rect x="372.8" y="135.4" width="0.8" height="1" fill="#3a2a60" opacity="0.75"/><rect x="309.9" y="158.9" width="4" height="2" fill="none" stroke="#4a5a90" stroke-width="0.4" opacity="0.7"/><line x1="286.3" y1="174.0" x2="289.2" y2="176.9" stroke="#8c90b0" stroke-width="0.4" opacity="0.7"/><line x1="275.5" y1="164.4" x2="275.5" y2="173.4" stroke="#4a5a90" stroke-width="0.4" opacity="0.7"/><rect x="362.2" y="162.6" width="2" height="0.8" fill="#4a5a90" opacity="0.75"/><rect x="282.7" y="137.3" width="0.8" height="1.5" fill="#3a2a60" opacity="0.75"/><rect x="319.2" y="184.6" width="2" height="1.5" fill="#9a8ab8" opacity="0.75"/><rect x="305.7" y="141.4" width="0.8" height="0.8" fill="#3a2a60" opacity="0.75"/><rect x="354.2" y="156.6" width="0.8" height="1.5" fill="#a8b0c8" opacity="0.75"/><rect x="360.8" y="150.2" width="2" height="1.5" fill="#3a2a60" opacity="0.75"/><rect x="336.6" y="164.3" width="3" height="2" fill="none" stroke="#6a78a0" stroke-width="0.4" opacity="0.7"/><rect x="354.8" y="185.7" width="2" height="3" fill="none" stroke="#9a8ab8" stroke-width="0.4" opacity="0.7"/><rect x="357.7" y="184.7" width="1" height="0.8" fill="#3a2a60" opacity="0.75"/><rect x="361.5" y="148.5" width="0.8" height="0.8" fill="#6a78a0" opacity="0.75"/><rect x="298.7" y="141.9" width="0.8" height="1" fill="#a8b0c8" opacity="0.75"/><rect x="325.9" y="163.8" width="2" height="1.5" fill="#8c90b0" opacity="0.75"/><rect x="354.1" y="145.0" width="1" height="1.5" fill="#8c90b0" opacity="0.75"/><rect x="330.3" y="164.6" width="2" height="3" fill="none" stroke="#4a5a90" stroke-width="0.4" opacity="0.7"/><line x1="363.0" y1="130.9" x2="363.0" y2="136.3" stroke="#8c90b0" stroke-width="0.4" opacity="0.7"/><line x1="368.8" y1="167.3" x2="374.9" y2="161.2" stroke="#9a8ab8" stroke-width="0.4" opacity="0.7"/><rect x="296.8" y="156.1" width="1.5" height="1" fill="#4a5a90" opacity="0.75"/><rect x="343.5" y="168.7" width="1.5" height="0.8" fill="#3a2a60" opacity="0.75"/><rect x="262.8" y="144.1" width="2" height="1.5" fill="#a8b0c8" opacity="0.75"/><line x1="310.1" y1="195.0" x2="314.7" y2="199.6" stroke="#8c90b0" stroke-width="0.4" opacity="0.7"/><rect x="315.1" y="162.3" width="2" height="2" fill="none" stroke="#a8b0c8" stroke-width="0.4" opacity="0.7"/><rect x="320.0" y="201.3" width="4" height="2" fill="none" stroke="#4a5a90" stroke-width="0.4" opacity="0.7"/><rect x="305.9" y="137.1" width="2" height="1" fill="#a8b0c8" opacity="0.75"/><line x1="336.7" y1="174.9" x2="336.7" y2="182.6" stroke="#6a78a0" stroke-width="0.4" opacity="0.7"/><rect x="339.7" y="153.0" width="1" height="1.5" fill="#3a2a60" opacity="0.75"/><rect x="296.1" y="143.7" width="4" height="2" fill="none" stroke="#4a5a90" stroke-width="0.4" opacity="0.7"/><rect x="268.7" y="146.1" width="0.8" height="0.8" fill="#4a5a90" opacity="0.75"/><line x1="289.0" y1="146.7" x2="289.0" y2="150.7" stroke="#3a2a60" stroke-width="0.4" opacity="0.7"/><rect x="340.5" y="154.1" width="1.5" height="1" fill="#a8b0c8" opacity="0.75"/><rect x="323.3" y="135.4" width="3" height="2" fill="none" stroke="#8c90b0" stroke-width="0.4" opacity="0.7"/><rect x="317.0" y="183.3" width="1.5" height="0.8" fill="#a8b0c8" opacity="0.75"/><rect x="343.4" y="202.2" width="1" height="1" fill="#4a5a90" opacity="0.75"/><rect x="343.4" y="170.3" width="0.8" height="1.5" fill="#6a78a0" opacity="0.75"/><rect x="322.1" y="178.5" width="0.8" height="1" fill="#8c90b0" opacity="0.75"/><rect x="287.9" y="176.6" width="2" height="1.5" fill="#6a78a0" opacity="0.75"/><rect x="357.3" y="150.6" width="3" height="3" fill="none" stroke="#a8b0c8" stroke-width="0.4" opacity="0.7"/><rect x="350.4" y="169.4" width="3" height="3" fill="none" stroke="#3a2a60" stroke-width="0.4" opacity="0.7"/><rect x="327.8" y="202.4" width="2" height="1.5" fill="#a8b0c8" opacity="0.75"/><rect x="373.7" y="144.4" width="0.8" height="1" fill="#6a78a0" opacity="0.75"/><line x1="346.3" y1="170.6" x2="350.8" y2="166.1" stroke="#3a2a60" stroke-width="0.4" opacity="0.7"/><line x1="329.1" y1="190.2" x2="331.6" y2="187.8" stroke="#a8b0c8" stroke-width="0.4" opacity="0.7"/><rect x="372.0" y="147.0" width="0.8" height="1.5" fill="#4a5a90" opacity="0.75"/><rect x="281.0" y="148.1" width="0.8" height="1.5" fill="#9a8ab8" opacity="0.75"/><rect x="329.9" y="186.5" width="1.5" height="1.5" fill="#8c90b0" opacity="0.75"/><rect x="274.3" y="149.5" width="1" height="0.8" fill="#3a2a60" opacity="0.75"/><rect x="355.0" y="175.6" width="2" height="1.5" fill="#a8b0c8" opacity="0.75"/><rect x="303.6" y="160.8" width="1" height="1" fill="#6a78a0" opacity="0.75"/><rect x="322.5" y="187.8" width="0.8" height="1" fill="#4a5a90" opacity="0.75"/><rect x="319.5" y="167.2" width="0.8" height="0.8" fill="#6a78a0" opacity="0.75"/><rect x="314.1" y="157.8" width="1" height="1.5" fill="#3a2a60" opacity="0.75"/><rect x="308.3" y="138.1" width="1.5" height="1" fill="#9a8ab8" opacity="0.75"/><rect x="342.6" y="185.5" width="2" height="0.8" fill="#8c90b0" opacity="0.75"/><rect x="334.6" y="195.9" width="1" height="0.8" fill="#8c90b0" opacity="0.75"/><line x1="306.3" y1="170.9" x2="306.3" y2="177.5" stroke="#9a8ab8" stroke-width="0.4" opacity="0.7"/><rect x="316.7" y="194.8" width="2" height="1" fill="#6a78a0" opacity="0.75"/><rect x="322.1" y="156.4" width="4" height="2" fill="none" stroke="#3a2a60" stroke-width="0.4" opacity="0.7"/><rect x="321.8" y="142.2" width="2" height="1.5" fill="#a8b0c8" opacity="0.75"/><rect x="360.2" y="129.5" width="3" height="3" fill="none" stroke="#8c90b0" stroke-width="0.4" opacity="0.7"/><rect x="317.7" y="144.2" width="2" height="0.8" fill="#a8b0c8" opacity="0.75"/><rect x="358.3" y="136.3" width="2" height="3" fill="none" stroke="#4a5a90" stroke-width="0.4" opacity="0.7"/><line x1="326.0" y1="129.1" x2="326.0" y2="132.1" stroke="#a8b0c8" stroke-width="0.4" opacity="0.7"/><rect x="364.6" y="131.4" width="0.8" height="1" fill="#3a2a60" opacity="0.75"/><line x1="348.4" y1="131.5" x2="354.1" y2="137.2" stroke="#4a5a90" stroke-width="0.4" opacity="0.7"/><rect x="263.4" y="139.6" width="0.8" height="1" fill="#3a2a60" opacity="0.75"/><rect x="327.2" y="137.3" width="3" height="3" fill="none" stroke="#6a78a0" stroke-width="0.4" opacity="0.7"/><rect x="312.1" y="168.4" width="4" height="2" fill="none" stroke="#3a2a60" stroke-width="0.4" opacity="0.7"/><rect x="306.3" y="178.6" width="2" height="1.5" fill="#9a8ab8" opacity="0.75"/><rect x="343.4" y="126.0" width="2" height="0.8" fill="#3a2a60" opacity="0.75"/><line x1="374.6" y1="136.9" x2="379.8" y2="142.1" stroke="#4a5a90" stroke-width="0.4" opacity="0.7"/><rect x="356.1" y="168.3" width="1" height="1" fill="#a8b0c8" opacity="0.75"/><rect x="353.2" y="150.7" width="3" height="3" fill="none" stroke="#4a5a90" stroke-width="0.4" opacity="0.7"/><rect x="317.3" y="154.8" width="0.8" height="0.8" fill="#4a5a90" opacity="0.75"/><rect x="346.4" y="180.2" width="0.8" height="1" fill="#9a8ab8" opacity="0.75"/><rect x="335.7" y="132.0" width="0.8" height="1" fill="#a8b0c8" opacity="0.75"/><rect x="312.3" y="130.7" width="4" height="2" fill="none" stroke="#9a8ab8" stroke-width="0.4" opacity="0.7"/><rect x="342.6" y="184.8" width="3" height="3" fill="none" stroke="#9a8ab8" stroke-width="0.4" opacity="0.7"/><rect x="352.6" y="172.8" width="0.8" height="1" fill="#a8b0c8" opacity="0.75"/><line x1="302.7" y1="151.7" x2="302.7" y2="158.0" stroke="#8c90b0" stroke-width="0.4" opacity="0.7"/><rect x="325.2" y="186.5" width="4" height="2" fill="none" stroke="#4a5a90" stroke-width="0.4" opacity="0.7"/><rect x="293.0" y="167.0" width="1.5" height="1.5" fill="#a8b0c8" opacity="0.75"/><line x1="324.1" y1="136.1" x2="324.1" y2="145.0" stroke="#4a5a90" stroke-width="0.4" opacity="0.7"/><line x1="332.5" y1="127.1" x2="335.2" y2="124.4" stroke="#8c90b0" stroke-width="0.4" opacity="0.7"/><rect x="333.6" y="179.4" width="1.5" height="1" fill="#6a78a0" opacity="0.75"/><line x1="372.3" y1="160.3" x2="380.7" y2="160.3" stroke="#a8b0c8" stroke-width="0.4" opacity="0.7"/><rect x="331.6" y="145.6" width="4" height="2" fill="none" stroke="#6a78a0" stroke-width="0.4" opacity="0.7"/><rect x="291.3" y="169.7" width="4" height="2" fill="none" stroke="#a8b0c8" stroke-width="0.4" opacity="0.7"/><line x1="318.2" y1="156.5" x2="320.9" y2="153.8" stroke="#3a2a60" stroke-width="0.4" opacity="0.7"/><line x1="338.5" y1="174.9" x2="341.5" y2="172.0" stroke="#a8b0c8" stroke-width="0.4" opacity="0.7"/><rect x="275.9" y="156.6" width="1.5" height="0.8" fill="#a8b0c8" opacity="0.75"/><line x1="332.6" y1="150.9" x2="332.6" y2="158.2" stroke="#8c90b0" stroke-width="0.4" opacity="0.7"/><path d="M261 182 L268 189 H300 L313 202 H332" fill="none" stroke="#7a22c0" stroke-width="0.9"/><rect x="262" y="125" width="126" height="78" fill="url(#vias)"/><g font-family="Liberation Mono" font-size="3.7" fill="#b8c8a0"><text x="391" y="148.5">R1 Rev:V1</text><text x="391" y="153.2">2019.08.16</text><text x="391" y="158">120100120180-01-001</text></g></svg><div class="a" style="left:619px;top:43px;width:92px;height:338px;background:#f0f0f0;"></div><div class="a" style="left:621px;top:43px;width:1.2px;height:337px;background:#8c8c8c;"></div><div class="a" style="left:622px;top:43.3px;width:87px;height:5.4px;background:linear-gradient(#e2e2e2,#c8c8c8)"></div><div class="a" style="left:622.5px;top:44.5px;width:1.2px;height:3.8px;background:repeating-linear-gradient(#1a5ae0 0 1px,transparent 1px 1.9px);"></div><div class="t" style="left:625px;top:45.3px;font-size:4.6px;color:#222;">Options</div><svg class="a" style="left:692px;top:44.3px" width="18" height="4" viewBox="0 0 18 4"><path d="M3 1.5 L5 2.8 L3 3.8Z" fill="#111"/><path d="M9 1.9 H11" stroke="#111" stroke-width="0.9"/><path d="M13.3 0.8 L14.5 2.6 L15.7 0.8" stroke="#111" stroke-width="0.8" fill="none"/></svg><div class="t" style="left:625px;top:57.8px;font-size:4.6px;color:#222;transform:scaleX(0.87);transform-origin:0 0;">Active Class and Subclass:</div><div class="a" style="left:635px;top:67.2px;width:56px;height:7.2px;background:#e6e6e6;border:0.8px solid #adadad"></div><div class="t" style="left:636.5px;top:69.8px;font-size:4.6px;color:#111;transform:scaleX(0.82);transform-origin:0 0;">Board Geometry</div><svg class="a" style="left:685px;top:69.5px" width="4" height="3"><path d="M0.3 0.5 L2 2.2 L3.7 0.5" stroke="#444" stroke-width="0.6" fill="none"/></svg><div class="a" style="left:628px;top:80px;width:4.5px;height:4.5px;background:#6a9a50;border:0.8px solid #5a5a5a"></div><div class="a" style="left:635px;top:79px;width:56px;height:9px;background:#fff;border:0.8px solid #a0a0a0"></div><div class="a" style="left:637px;top:80.6px;width:3px;height:5.4px;background:#3f8a2e;border-left:0.6px solid #1a3a1a"></div><div class="t" style="left:643px;top:82.6px;font-size:4.6px;color:#111;transform:scaleX(0.9);transform-origin:0 0;">Silkscreen_Bottom</div><svg class="a" style="left:685px;top:82.5px" width="4" height="3"><path d="M0.3 0.5 L2 2.2 L3.7 0.5" stroke="#444" stroke-width="0.6" fill="none"/></svg><div class="a" style="left:622px;top:141.3px;width:89px;height:0.8px;background:#c8c8c8;"></div><div class="a" style="left:622px;top:144.2px;width:87px;height:5.4px;background:linear-gradient(#e2e2e2,#c8c8c8)"></div><div class="a" style="left:622.5px;top:145.39999999999998px;width:1.2px;height:3.8px;background:repeating-linear-gradient(#1a5ae0 0 1px,transparent 1px 1.9px);"></div><div class="t" style="left:625px;top:146.2px;font-size:4.6px;color:#222;">Find</div><svg class="a" style="left:692px;top:145.2px" width="18" height="4" viewBox="0 0 18 4"><path d="M3 1.5 L5 2.8 L3 3.8Z" fill="#111"/><path d="M9 1.9 H11" stroke="#111" stroke-width="0.9"/><path d="M13.3 0.8 L14.5 2.6 L15.7 0.8" stroke="#111" stroke-width="0.8" fill="none"/></svg><div class="a" style="left:625.5px;top:156px;width:68.5px;height:83px;background:transparent;border:0.7px solid #d4d4d4"></div><div class="a" style="left:627px;top:153.5px;width:44px;height:4px;background:#f0f0f0;"></div><div class="t" style="left:628px;top:154.8px;font-size:4.4px;color:#222;transform:scaleX(0.85);transform-origin:0 0;">Design Object Find Filter</div><div class="a" style="left:628px;top:160.8px;width:16.5px;height:5.8px;background:#e8e8e8;border:0.6px solid #a8a8a8"></div><div class="t" style="left:630.5px;top:162.8px;font-size:4.5px;color:#111;transform:scaleX(0.85);transform-origin:0 0;">All On</div><div class="a" style="left:648px;top:160.8px;width:18.5px;height:5.8px;background:#e8e8e8;border:0.6px solid #a8a8a8"></div><div class="t" style="left:650.5px;top:162.8px;font-size:4.5px;color:#111;transform:scaleX(0.85);transform-origin:0 0;">All Off</div><div class="a" style="left:627.6px;top:168.8px;width:4.6px;height:4.6px;background:#fff;border:0.6px solid #5a5a5a"></div><div class="t" style="left:634.3px;top:170.0px;font-size:4.6px;color:#1a1a1a;transform:scaleX(0.9);transform-origin:0 0;">Groups</div><div class="a" style="left:658.2px;top:168.8px;width:4.6px;height:4.6px;background:#fff;border:0.6px solid #5a5a5a"></div><div class="t" style="left:665px;top:170.0px;font-size:4.6px;color:#1a1a1a;transform:scaleX(0.88);transform-origin:0 0;">Shapes</div><div class="a" style="left:627.6px;top:177.20000000000002px;width:4.6px;height:4.6px;background:#fff;border:0.6px solid #d0d0d0"></div><div class="t" style="left:634.3px;top:178.4px;font-size:4.6px;color:#a8a8a8;transform:scaleX(0.9);transform-origin:0 0;">Comps</div><div class="a" style="left:658.2px;top:177.20000000000002px;width:4.6px;height:4.6px;background:#fff;border:0.6px solid #5a5a5a"></div><div class="t" style="left:665px;top:178.4px;font-size:4.6px;color:#1a1a1a;transform:scaleX(0.88);transform-origin:0 0;">Voids/Cavities</div><div class="a" style="left:627.6px;top:185.10000000000002px;width:4.6px;height:4.6px;background:#fff;border:0.6px solid #5a5a5a"></div><div class="t" style="left:634.3px;top:186.3px;font-size:4.6px;color:#1a1a1a;transform:scaleX(0.9);transform-origin:0 0;">Symbols</div><div class="a" style="left:658.2px;top:185.10000000000002px;width:4.6px;height:4.6px;background:#fff;border:0.6px solid #5a5a5a"></div><div class="t" style="left:665px;top:186.3px;font-size:4.6px;color:#1a1a1a;transform:scaleX(0.88);transform-origin:0 0;">Cline segs</div><div class="a" style="left:627.6px;top:193.3px;width:4.6px;height:4.6px;background:#fff;border:0.6px solid #d0d0d0"></div><div class="t" style="left:634.3px;top:194.5px;font-size:4.6px;color:#a8a8a8;transform:scaleX(0.9);transform-origin:0 0;">Functions</div><div class="a" style="left:658.2px;top:193.3px;width:4.6px;height:4.6px;background:#fff;border:0.6px solid #5a5a5a"></div><div class="t" style="left:665px;top:194.5px;font-size:4.6px;color:#1a1a1a;transform:scaleX(0.88);transform-origin:0 0;">Other segs</div><div class="a" style="left:627.6px;top:201.3px;width:4.6px;height:4.6px;background:#fff;border:0.6px solid #5a5a5a"></div><div class="t" style="left:634.3px;top:202.5px;font-size:4.6px;color:#1a1a1a;transform:scaleX(0.9);transform-origin:0 0;">Nets</div><div class="a" style="left:658.2px;top:201.3px;width:4.6px;height:4.6px;background:#fff;border:0.6px solid #5a5a5a"></div><div class="t" style="left:665px;top:202.5px;font-size:4.6px;color:#1a1a1a;transform:scaleX(0.88);transform-origin:0 0;">Figures</div><div class="a" style="left:627.6px;top:209.4px;width:4.6px;height:4.6px;background:#fff;border:0.6px solid #5a5a5a"></div><div class="t" style="left:634.3px;top:210.6px;font-size:4.6px;color:#1a1a1a;transform:scaleX(0.9);transform-origin:0 0;">Pins</div><div class="a" style="left:658.2px;top:209.4px;width:4.6px;height:4.6px;background:#fff;border:0.6px solid #5a5a5a"></div><div class="t" style="left:665px;top:210.6px;font-size:4.6px;color:#1a1a1a;transform:scaleX(0.88);transform-origin:0 0;">DRC errors</div><div class="a" style="left:627.6px;top:217.60000000000002px;width:4.6px;height:4.6px;background:#fff;border:0.6px solid #5a5a5a"></div><div class="t" style="left:634.3px;top:218.8px;font-size:4.6px;color:#1a1a1a;transform:scaleX(0.9);transform-origin:0 0;">Vias</div><div class="a" style="left:658.2px;top:217.60000000000002px;width:4.6px;height:4.6px;background:#fff;border:0.6px solid #5a5a5a"></div><div class="t" style="left:665px;top:218.8px;font-size:4.6px;color:#1a1a1a;transform:scaleX(0.88);transform-origin:0 0;">Text</div><div class="a" style="left:627.6px;top:225.4px;width:4.6px;height:4.6px;background:#fff;border:0.6px solid #5a5a5a"></div><div class="t" style="left:634.3px;top:226.6px;font-size:4.6px;color:#1a1a1a;transform:scaleX(0.9);transform-origin:0 0;">Clines</div><div class="a" style="left:658.2px;top:225.4px;width:4.6px;height:4.6px;background:#fff;border:0.6px solid #5a5a5a"></div><div class="t" style="left:665px;top:226.6px;font-size:4.6px;color:#1a1a1a;transform:scaleX(0.88);transform-origin:0 0;">Text Rectangles</div><div class="a" style="left:627.6px;top:233.3px;width:4.6px;height:4.6px;background:#fff;border:0.6px solid #5a5a5a"></div><div class="t" style="left:634.3px;top:234.5px;font-size:4.6px;color:#1a1a1a;transform:scaleX(0.9);transform-origin:0 0;">Lines</div><div class="a" style="left:658.2px;top:233.3px;width:4.6px;height:4.6px;background:#fff;border:0.6px solid #5a5a5a"></div><div class="t" style="left:665px;top:234.5px;font-size:4.6px;color:#1a1a1a;transform:scaleX(0.88);transform-origin:0 0;">Rat Ts</div><svg class="a" style="left:658.4px;top:217.8px" width="4.4" height="4.4"><path d="M0.8 2.2 L1.9 3.4 L3.8 0.8" stroke="#111" stroke-width="0.7" fill="none"/></svg><div class="a" style="left:625.5px;top:245.5px;width:68.5px;height:22.5px;background:transparent;border:0.7px solid #d4d4d4"></div><div class="a" style="left:627px;top:243.5px;width:26px;height:4px;background:#f0f0f0;"></div><div class="t" style="left:628px;top:244.6px;font-size:4.4px;color:#222;transform:scaleX(0.85);transform-origin:0 0;">Find By Name</div><div class="a" style="left:627px;top:249.4px;width:45.5px;height:7px;background:#e6e6e6;border:0.7px solid #adadad"></div><div class="t" style="left:629px;top:251.9px;font-size:4.6px;color:#111;">Net</div><svg class="a" style="left:667px;top:251.8px" width="4" height="3"><path d="M0.3 0.5 L2 2.2 L3.7 0.5" stroke="#444" stroke-width="0.6" fill="none"/></svg><div class="a" style="left:674px;top:249.4px;width:19px;height:7px;background:#e6e6e6;border:0.7px solid #adadad"></div><div class="t" style="left:675.5px;top:251.9px;font-size:4.6px;color:#111;">Name</div><svg class="a" style="left:688.5px;top:251.8px" width="4" height="3"><path d="M0.3 0.5 L2 2.2 L3.7 0.5" stroke="#444" stroke-width="0.6" fill="none"/></svg><div class="t" style="left:627.5px;top:260.5px;font-size:4px;color:#555;">&gt;</div><div class="a" style="left:631.8px;top:258px;width:40.5px;height:7.5px;background:#fff;border-left:1px solid #6a6a6a;border-top:0.7px solid #b0b0b0"></div><div class="a" style="left:674.5px;top:258px;width:18px;height:7px;background:#e4e4e4;border:0.7px solid #9a9a9a"></div><div class="t" style="left:676.2px;top:260.5px;font-size:4.6px;color:#111;">More...</div><div class="a" style="left:625px;top:274.5px;width:33px;height:5px;background:#e0e0e0;border:0.7px solid #b8b8b8"></div><div class="t" style="left:627px;top:276.0px;font-size:4.3px;color:#222;">Find By Query</div><div class="a" style="left:622px;top:279.6px;width:87px;height:5.4px;background:linear-gradient(#e2e2e2,#c8c8c8)"></div><div class="a" style="left:622.5px;top:280.8px;width:1.2px;height:3.8px;background:repeating-linear-gradient(#1a5ae0 0 1px,transparent 1px 1.9px);"></div><div class="t" style="left:625px;top:281.6px;font-size:4.6px;color:#222;">Visibility</div><svg class="a" style="left:692px;top:280.6px" width="18" height="4" viewBox="0 0 18 4"><path d="M3 1.5 L5 2.8 L3 3.8Z" fill="#111"/><path d="M9 1.9 H11" stroke="#111" stroke-width="0.9"/><path d="M13.3 0.8 L14.5 2.6 L15.7 0.8" stroke="#111" stroke-width="0.8" fill="none"/></svg><div class="t" style="left:622.3px;top:294.3px;font-size:4.6px;color:#222;transform:scaleX(0.85);transform-origin:0 0;">Views</div><div class="a" style="left:638px;top:291.3px;width:58px;height:7.8px;background:#e4e4e4;border:0.7px solid #c4c4c4"></div><svg class="a" style="left:690px;top:294px" width="4" height="3"><path d="M0.3 0.5 L2 2.2 L3.7 0.5" stroke="#999" stroke-width="0.6" fill="none"/></svg><div class="t" style="left:622.3px;top:302.6px;font-size:4.6px;color:#222;transform:scaleX(0.85);transform-origin:0 0;"><u>Layer</u></div><div class="t" style="left:645px;top:302.6px;font-size:4.5px;color:#222;transform:scaleX(0.8);transform-origin:0 0;"><u>Etch</u></div><div class="t" style="left:656px;top:302.6px;font-size:4.5px;color:#222;transform:scaleX(0.8);transform-origin:0 0;"><u>Pin</u></div><div class="t" style="left:666px;top:302.6px;font-size:4.5px;color:#222;transform:scaleX(0.8);transform-origin:0 0;"><u>Via</u></div><div class="t" style="left:674px;top:302.6px;font-size:4.5px;color:#222;transform:scaleX(0.8);transform-origin:0 0;"><u>Drc</u></div><div class="t" style="left:682px;top:302.6px;font-size:4.5px;color:#222;transform:scaleX(0.8);transform-origin:0 0;"><u>Drc</u></div><div class="t" style="left:689px;top:302.6px;font-size:4.5px;color:#222;transform:scaleX(0.8);transform-origin:0 0;"><u>All</u></div><div class="t" style="left:622.3px;top:310.6px;font-size:4.5px;color:#222;transform:scaleX(0.85);transform-origin:0 0;">Conductors</div><div class="t" style="left:622.3px;top:319.0px;font-size:4.5px;color:#222;transform:scaleX(0.85);transform-origin:0 0;">Planes</div><div class="a" style="left:650.7px;top:309.3px;width:4.8px;height:4.8px;background:#fff;border:0.6px solid #9a9a9a"></div><svg class="a" style="left:650.7px;top:309.3px" width="4.8" height="4.8" viewBox="0 0 4.8 4.8"><path d="M1 2.5 L2 3.6 L3.9 1.1" stroke="#333" stroke-width="0.55" fill="none"/></svg><div class="a" style="left:658.2px;top:309.3px;width:4.8px;height:4.8px;background:#fff;border:0.6px solid #9a9a9a"></div><svg class="a" style="left:658.2px;top:309.3px" width="4.8" height="4.8" viewBox="0 0 4.8 4.8"><path d="M1 2.5 L2 3.6 L3.9 1.1" stroke="#333" stroke-width="0.55" fill="none"/></svg><div class="a" style="left:665.7px;top:309.3px;width:4.8px;height:4.8px;background:#fff;border:0.6px solid #9a9a9a"></div><svg class="a" style="left:665.7px;top:309.3px" width="4.8" height="4.8" viewBox="0 0 4.8 4.8"><path d="M1 2.5 L2 3.6 L3.9 1.1" stroke="#333" stroke-width="0.55" fill="none"/></svg><div class="a" style="left:673.7px;top:309.3px;width:4.8px;height:4.8px;background:#fff;border:0.6px solid #9a9a9a"></div><svg class="a" style="left:673.7px;top:309.3px" width="4.8" height="4.8" viewBox="0 0 4.8 4.8"><path d="M1 2.5 L2 3.6 L3.9 1.1" stroke="#333" stroke-width="0.55" fill="none"/></svg><div class="a" style="left:680.7px;top:309.3px;width:4.8px;height:4.8px;background:#fff;border:0.6px solid #9a9a9a"></div><svg class="a" style="left:680.7px;top:309.3px" width="4.8" height="4.8" viewBox="0 0 4.8 4.8"><path d="M1 2.5 L2 3.6 L3.9 1.1" stroke="#333" stroke-width="0.55" fill="none"/></svg><div class="a" style="left:688.7px;top:309.3px;width:4.8px;height:4.8px;background:#fff;border:0.6px solid #9a9a9a"></div><svg class="a" style="left:688.7px;top:309.3px" width="4.8" height="4.8" viewBox="0 0 4.8 4.8"><path d="M1 2.5 L2 3.6 L3.9 1.1" stroke="#333" stroke-width="0.55" fill="none"/></svg><div class="a" style="left:640.2px;top:317.7px;width:4.8px;height:4.8px;background:#fff;border:0.6px solid #9a9a9a"></div><svg class="a" style="left:640.2px;top:317.7px" width="4.8" height="4.8" viewBox="0 0 4.8 4.8"><path d="M1 2.5 L2 3.6 L3.9 1.1" stroke="#333" stroke-width="0.55" fill="none"/></svg><div class="a" style="left:658.2px;top:317.7px;width:4.8px;height:4.8px;background:#fff;border:0.6px solid #9a9a9a"></div><svg class="a" style="left:658.2px;top:317.7px" width="4.8" height="4.8" viewBox="0 0 4.8 4.8"><path d="M1 2.5 L2 3.6 L3.9 1.1" stroke="#333" stroke-width="0.55" fill="none"/></svg><div class="a" style="left:665.7px;top:317.7px;width:4.8px;height:4.8px;background:#fff;border:0.6px solid #9a9a9a"></div><svg class="a" style="left:665.7px;top:317.7px" width="4.8" height="4.8" viewBox="0 0 4.8 4.8"><path d="M1 2.5 L2 3.6 L3.9 1.1" stroke="#333" stroke-width="0.55" fill="none"/></svg><div class="a" style="left:673.7px;top:317.7px;width:4.8px;height:4.8px;background:#fff;border:0.6px solid #9a9a9a"></div><svg class="a" style="left:673.7px;top:317.7px" width="4.8" height="4.8" viewBox="0 0 4.8 4.8"><path d="M1 2.5 L2 3.6 L3.9 1.1" stroke="#333" stroke-width="0.55" fill="none"/></svg><div class="a" style="left:680.7px;top:317.7px;width:4.8px;height:4.8px;background:#fff;border:0.6px solid #9a9a9a"></div><svg class="a" style="left:680.7px;top:317.7px" width="4.8" height="4.8" viewBox="0 0 4.8 4.8"><path d="M1 2.5 L2 3.6 L3.9 1.1" stroke="#333" stroke-width="0.55" fill="none"/></svg><div class="a" style="left:688.7px;top:317.7px;width:4.8px;height:4.8px;background:#fff;border:0.6px solid #9a9a9a"></div><svg class="a" style="left:688.7px;top:317.7px" width="4.8" height="4.8" viewBox="0 0 4.8 4.8"><path d="M1 2.5 L2 3.6 L3.9 1.1" stroke="#333" stroke-width="0.55" fill="none"/></svg><div class="t" style="left:622.3px;top:328.5px;font-size:4.5px;color:#222;transform:scaleX(0.85);transform-origin:0 0;">Top</div><div class="a" style="left:650.5px;top:327.0px;width:5px;height:5px;background:#22dd22;border:0.7px solid #7a7a7a"></div><div class="a" style="left:658.5px;top:327.0px;width:5px;height:5px;background:#22dd22;border:0.7px solid #7a7a7a"></div><div class="a" style="left:666.5px;top:327.0px;width:5px;height:5px;background:#22dd22;border:0.7px solid #7a7a7a"></div><div class="a" style="left:674.5px;top:327.0px;width:5px;height:5px;background:#22dd22;border:0.7px solid #7a7a7a"></div><div class="a" style="left:682.5px;top:327.0px;width:5px;height:5px;background:#ee1111;border:0.7px solid #7a7a7a"></div><div class="a" style="left:689.7px;top:327.2px;width:4.8px;height:4.8px;background:#fff;border:0.6px solid #666"></div><svg class="a" style="left:689.7px;top:327.2px" width="4.8" height="4.8" viewBox="0 0 4.8 4.8"><path d="M1 2.5 L2 3.6 L3.9 1.1" stroke="#333" stroke-width="0.55" fill="none"/></svg><div class="t" style="left:622.3px;top:336.8px;font-size:4.5px;color:#222;transform:scaleX(0.85);transform-origin:0 0;">Gnd</div><div class="a" style="left:650.5px;top:335.3px;width:5px;height:5px;background:#5a8a3a;border:0.7px solid #7a7a7a"></div><div class="a" style="left:658.5px;top:335.3px;width:5px;height:5px;background:#5a8a3a;border:0.7px solid #7a7a7a"></div><div class="a" style="left:666.5px;top:335.3px;width:5px;height:5px;background:#5a8a3a;border:0.7px solid #7a7a7a"></div><div class="a" style="left:674.5px;top:335.3px;width:5px;height:5px;background:#5a8a3a;border:0.7px solid #7a7a7a"></div><div class="a" style="left:682.5px;top:335.3px;width:5px;height:5px;background:#ee1111;border:0.7px solid #7a7a7a"></div><div class="a" style="left:689.7px;top:335.5px;width:4.8px;height:4.8px;background:#fff;border:0.6px solid #666"></div><svg class="a" style="left:689.7px;top:335.5px" width="4.8" height="4.8" viewBox="0 0 4.8 4.8"><path d="M1 2.5 L2 3.6 L3.9 1.1" stroke="#333" stroke-width="0.55" fill="none"/></svg><div class="t" style="left:622.3px;top:344.6px;font-size:4.5px;color:#222;transform:scaleX(0.85);transform-origin:0 0;">Vcc</div><div class="a" style="left:650.5px;top:343.1px;width:5px;height:5px;background:#5a8a3a;border:0.7px solid #7a7a7a"></div><div class="a" style="left:658.5px;top:343.1px;width:5px;height:5px;background:#5a8a3a;border:0.7px solid #7a7a7a"></div><div class="a" style="left:666.5px;top:343.1px;width:5px;height:5px;background:#5a8a3a;border:0.7px solid #7a7a7a"></div><div class="a" style="left:674.5px;top:343.1px;width:5px;height:5px;background:#5a8a3a;border:0.7px solid #7a7a7a"></div><div class="a" style="left:682.5px;top:343.1px;width:5px;height:5px;background:#ee1111;border:0.7px solid #7a7a7a"></div><div class="a" style="left:689.7px;top:343.3px;width:4.8px;height:4.8px;background:#fff;border:0.6px solid #666"></div><svg class="a" style="left:689.7px;top:343.3px" width="4.8" height="4.8" viewBox="0 0 4.8 4.8"><path d="M1 2.5 L2 3.6 L3.9 1.1" stroke="#333" stroke-width="0.55" fill="none"/></svg><div class="t" style="left:622.3px;top:353.0px;font-size:4.5px;color:#222;transform:scaleX(0.85);transform-origin:0 0;">Bottom</div><div class="a" style="left:650.5px;top:351.5px;width:5px;height:5px;background:#e8e800;border:0.7px solid #7a7a7a"></div><div class="a" style="left:658.5px;top:351.5px;width:5px;height:5px;background:#e8e800;border:0.7px solid #7a7a7a"></div><div class="a" style="left:666.5px;top:351.5px;width:5px;height:5px;background:#e8e800;border:0.7px solid #7a7a7a"></div><div class="a" style="left:674.5px;top:351.5px;width:5px;height:5px;background:#e8e800;border:0.7px solid #7a7a7a"></div><div class="a" style="left:682.5px;top:351.5px;width:5px;height:5px;background:#ee1111;border:0.7px solid #7a7a7a"></div><div class="a" style="left:689.7px;top:351.7px;width:4.8px;height:4.8px;background:#fff;border:0.6px solid #666"></div><svg class="a" style="left:689.7px;top:351.7px" width="4.8" height="4.8" viewBox="0 0 4.8 4.8"><path d="M1 2.5 L2 3.6 L3.9 1.1" stroke="#333" stroke-width="0.55" fill="none"/></svg><div class="t" style="left:622.3px;top:361.0px;font-size:4.5px;color:#222;transform:scaleX(0.85);transform-origin:0 0;">All</div><div class="a" style="left:650.5px;top:359.5px;width:5px;height:5px;background:#5a8a3a;border:0.7px solid #7a7a7a"></div><div class="a" style="left:682.5px;top:359.5px;width:5px;height:5px;background:#ee1111;border:0.7px solid #7a7a7a"></div><div class="a" style="left:689.7px;top:359.7px;width:4.8px;height:4.8px;background:#fff;border:0.6px solid #666"></div><svg class="a" style="left:689.7px;top:359.7px" width="4.8" height="4.8" viewBox="0 0 4.8 4.8"><path d="M1 2.5 L2 3.6 L3.9 1.1" stroke="#333" stroke-width="0.55" fill="none"/></svg><div class="a" style="left:0px;top:343px;width:619px;height:38px;background:#f0f0f0;"></div><div class="a" style="left:13px;top:346px;width:6.5px;height:32px;background:linear-gradient(90deg,#9a9a9a 0 0.8px,#d8d8d8 0.8px,#e8e8e8 60%,#cfcfcf)"></div><div class="t" style="left:14.2px;top:347.8px;font-size:4.2px;color:#333;">&#215;</div><div class="a" style="left:15.5px;top:353.5px;width:1px;height:1px;background:#333;"></div><div class="t" style="left:14.2px;top:375.5px;font-size:4.4px;color:#222;transform:rotate(-90deg) scaleX(0.95);transform-origin:0 0">Command</div><div class="a" style="left:14.8px;top:374.6px;width:3.4px;height:1.6px;background:repeating-linear-gradient(90deg,#2a6ad0 0 1px,transparent 1px 1.7px);"></div><div class="a" style="left:19.5px;top:345.6px;width:471.5px;height:32.4px;background:#fff;"></div><div class="t" style="left:20.6px;top:348.8px;font-size:4.8px;color:#1a1a1a;transform:scaleX(0.82);transform-origin:0 0;">Opening existing design...</div><div class="t" style="left:20.6px;top:353.9px;font-size:4.8px;color:#1a1a1a;transform:scaleX(0.8);transform-origin:0 0;">Command &gt;</div><div class="a" style="left:491px;top:345.6px;width:9.5px;height:32.4px;background:#f0f0f0;"></div><svg class="a" style="left:492px;top:347px" width="5" height="30" viewBox="0 0 5 30"><path d="M0.8 3.2 L2.5 1.5 L4.2 3.2" stroke="#8a8a8a" stroke-width="0.6" fill="none"/><path d="M0.8 25.6 L2.5 27.3 L4.2 25.6" stroke="#8a8a8a" stroke-width="0.6" fill="none"/></svg><div class="a" style="left:500.5px;top:346.5px;width:5.5px;height:31px;background:linear-gradient(90deg,#c8c8c8,#e6e6e6 50%,#c8c8c8)"></div><div class="a" style="left:502px;top:349px;width:2.5px;height:2px;background:#444;"></div><div class="a" style="left:502px;top:352.5px;width:2.5px;height:2px;background:#555;"></div><div class="a" style="left:502px;top:359px;width:2.5px;height:2px;background:#333;"></div><div class="a" style="left:502px;top:363px;width:2.5px;height:2px;background:#6a7a9a;"></div><div class="a" style="left:502px;top:366px;width:2.5px;height:2px;background:#6a7aa0;"></div><div class="a" style="left:502px;top:369px;width:2.5px;height:2px;background:#333;"></div><div class="a" style="left:502px;top:372.5px;width:2.5px;height:2px;background:#333;"></div><div class="a" style="left:501.5px;top:375.5px;width:3.5px;height:1.5px;background:repeating-linear-gradient(90deg,#2a6ad0 0 1px,transparent 1px 1.7px);"></div><div class="a" style="left:506px;top:346.5px;width:112.5px;height:31px;background:#000;"></div><div class="a" style="left:534.5px;top:347px;width:0.8px;height:26px;background:#555;"></div><div class="a" style="left:537px;top:375px;width:20px;height:0.7px;background:#8a8a8a;"></div><div class="a" style="left:537px;top:373px;width:0.7px;height:2.5px;background:#8a8a8a;"></div><div class="a" style="left:556.5px;top:373px;width:0.7px;height:2.5px;background:#8a8a8a;"></div><div class="a" style="left:543px;top:349px;width:47px;height:9.5px;background:#fff;border-radius:1.5px"></div><svg class="a" style="left:545px;top:358px" width="5" height="3"><path d="M0 0 H5 L1.5 2.5Z" fill="#fff"/></svg><svg class="a" style="left:0;top:0" width="711" height="400" viewBox="0 0 711 400"><path d="M546 352.2 H549.2 M547.6 351.5 V356 M546.3 354 H549 M546 356 L549.2 355.6" stroke="#333" stroke-width="0.45" fill="none"/><path d="M549.9 352.2 H553.1 M551.5 351.5 V356 M550.1999999999999 354 H552.9 M549.9 356 L553.1 355.6" stroke="#333" stroke-width="0.45" fill="none"/><path d="M553.8 352.2 H557.0 M555.4 351.5 V356 M554.0999999999999 354 H556.8 M553.8 356 L557.0 355.6" stroke="#333" stroke-width="0.45" fill="none"/><path d="M557.6999999999999 352.2 H560.9 M559.3 351.5 V356 M557.9999999999999 354 H560.6999999999999 M557.6999999999999 356 L560.9 355.6" stroke="#333" stroke-width="0.45" fill="none"/><path d="M561.5999999999999 352.2 H564.8 M563.1999999999999 351.5 V356 M561.8999999999999 354 H564.5999999999999 M561.5999999999999 356 L564.8 355.6" stroke="#333" stroke-width="0.45" fill="none"/><path d="M566.4999999999999 355.5 L567.0999999999999 356.2" stroke="#333" stroke-width="0.7"/><path d="M567.6999999999999 352.2 H570.9 M569.3 351.5 V356 M567.9999999999999 354 H570.6999999999999 M567.6999999999999 356 L570.9 355.6" stroke="#333" stroke-width="0.45" fill="none"/><path d="M571.5999999999999 352.2 H574.8 M573.1999999999999 351.5 V356 M571.8999999999999 354 H574.5999999999999 M571.5999999999999 356 L574.8 355.6" stroke="#333" stroke-width="0.45" fill="none"/><path d="M575.4999999999999 352.2 H578.6999999999999 M577.0999999999999 351.5 V356 M575.7999999999998 354 H578.4999999999999 M575.4999999999999 356 L578.6999999999999 355.6" stroke="#333" stroke-width="0.45" fill="none"/><path d="M579.3999999999999 352.2 H582.5999999999999 M580.9999999999999 351.5 V356 M579.6999999999998 354 H582.3999999999999 M579.3999999999999 356 L582.5999999999999 355.6" stroke="#333" stroke-width="0.45" fill="none"/><path d="M583.2999999999998 352.2 H586.4999999999999 M584.8999999999999 351.5 V356 M583.5999999999998 354 H586.2999999999998 M583.2999999999998 356 L586.4999999999999 355.6" stroke="#333" stroke-width="0.45" fill="none"/></svg><div class="a" style="left:549px;top:362.2px;width:69.5px;height:8.6px;background:#fff;"></div><div class="a" style="left:541.5px;top:360.5px;width:10px;height:10.5px;background:#e8571e;border-radius:2px;transform:rotate(-8deg)"></div><div class="t" style="left:543.6px;top:362.8px;font-size:8px;color:#fff;font-weight:bold">S</div><svg class="a" style="left:553px;top:362.5px" width="65" height="8" viewBox="0 0 65 8" fill="none" stroke="#1a6ad0" stroke-width="0.9"><path d="M1.5 2 H6.5 V5 H1.5Z M4 0.5 V7.5"/><path d="M10 2 L13 5.5 M11.5 5.5 H13.5 V3.5" stroke-width="0.8"/><circle cx="20" cy="4" r="2.8"/><rect x="18.6" y="2.8" width="2.8" height="2.2" stroke-width="0.6"/><rect x="28" y="0.6" width="2" height="4.2" rx="1" fill="#1a6ad0"/><path d="M29 5 V7.5"/><rect x="35" y="1.5" width="6" height="5" fill="#1a6ad0" stroke="none"/><path d="M35.5 3 H40.5 M35.5 4.8 H40.5" stroke="#fff" stroke-width="0.4"/><circle cx="46" cy="2" r="1.2" stroke="#8aa0c0"/><path d="M43.5 7 Q46 3.5 48.5 7" stroke="#8aa0c0"/><path d="M51 2 L53 1 H55 L57 2 L56 3.5 H55.5 V7 H52.5 V3.5 H52Z" fill="#1a6ad0" stroke="none"/><rect x="59.5" y="1" width="2.2" height="2.5" fill="#1a6ad0" stroke="none"/><rect x="62.3" y="1" width="2.2" height="6" fill="#1a6ad0" stroke="none"/><rect x="59.5" y="4.2" width="2.2" height="2.8" fill="#1a6ad0" stroke="none"/></svg><div class="a" style="left:0px;top:380.4px;width:711px;height:0.8px;background:#bdbdbd;"></div><div class="a" style="left:0px;top:381.2px;width:711px;height:6.6px;background:#f0f0f0;"></div><div class="a" style="left:-1px;top:382px;width:2.6px;height:5px;background:#444;border-radius:0 2px 2px 0"></div><div class="t" style="left:3px;top:383.4px;font-size:4.6px;color:#111;">Idle</div><div class="a" style="left:369.8px;top:381.4px;width:0.6px;height:6.2px;background:#c4c4c4;"></div><div class="a" style="left:391.8px;top:381.4px;width:0.6px;height:6.2px;background:#c4c4c4;"></div><div class="a" style="left:440px;top:381.4px;width:0.6px;height:6.2px;background:#c4c4c4;"></div><div class="a" style="left:486.5px;top:381.4px;width:0.6px;height:6.2px;background:#c4c4c4;"></div><div class="a" style="left:586.5px;top:381.4px;width:0.6px;height:6.2px;background:#c4c4c4;"></div><div class="a" style="left:602px;top:381.4px;width:0.6px;height:6.2px;background:#c4c4c4;"></div><div class="a" style="left:613.5px;top:381.4px;width:0.6px;height:6.2px;background:#c4c4c4;"></div><div class="a" style="left:648.5px;top:381.4px;width:0.6px;height:6.2px;background:#c4c4c4;"></div><div class="a" style="left:675.5px;top:381.4px;width:0.6px;height:6.2px;background:#c4c4c4;"></div><div class="a" style="left:694.5px;top:381.4px;width:0.6px;height:6.2px;background:#c4c4c4;"></div><div class="a" style="left:372px;top:381.6px;width:19.5px;height:5.2px;background:#00ee00;"></div><div class="a" style="left:676px;top:381.6px;width:18.4px;height:5.2px;background:#00ee00;"></div><div class="t" style="left:445px;top:383.3px;font-size:4.6px;color:#111;transform:scaleX(0.85);transform-origin:0 0;">Subclass: Silkscre</div><div class="t" style="left:494px;top:383.3px;font-size:4.6px;color:#111;transform:scaleX(0.85);transform-origin:0 0;">54.7500 55.5040</div><div class="a" style="left:537px;top:381.7px;width:5px;height:5px;background:#fff;border:0.6px solid #555"></div><div class="a" style="left:543px;top:381.7px;width:5px;height:5px;background:#fff;border:0.6px solid #555"></div><div class="t" style="left:615.5px;top:383.4px;font-size:4.4px;color:#1a1a1a;">Core shaft</div><div class="t" style="left:659px;top:383.4px;font-size:4.4px;color:#1a1a1a;">Off</div><div class="t" style="left:680px;top:383.4px;font-size:4.2px;color:#0a8a0a;">DRC</div><div class="t" style="left:701px;top:383.4px;font-size:4.4px;color:#1a1a1a;">0</div><div class="a" style="left:0px;top:387.8px;width:711px;height:12.2px;background:#1e1e1e;"></div><svg class="a" style="left:4px;top:390.5px" width="6.5" height="6" viewBox="0 0 6.5 6"><path d="M0 0.8 L6.5 0 V2.7 H0Z M0 3.3 H6.5 V6 L0 5.2Z" fill="#fff"/></svg><svg class="a" style="left:17px;top:390.5px" width="6" height="6" viewBox="0 0 6 6"><circle cx="3.6" cy="2.4" r="1.8" stroke="#eee" stroke-width="0.7" fill="none"/><path d="M2.3 3.7 L0.5 5.5" stroke="#eee" stroke-width="0.8"/></svg><svg class="a" style="left:30px;top:390.5px" width="6" height="6" viewBox="0 0 6 6"><circle cx="3" cy="3" r="2.3" stroke="#eee" stroke-width="0.8" fill="none"/></svg><div class="a" style="left:43.3px;top:390px;width:0.8px;height:7px;background:#6a6a6a;"></div><div class="a" style="left:213px;top:388px;width:13px;height:12px;background:#b86a30;"></div><div class="a" style="left:254px;top:388px;width:14.5px;height:12px;background:#3c3c3c;"></div><div class="a" style="left:52px;top:390.5px;width:6px;height:6px;background:radial-gradient(circle at 40% 60%,#3ad0a0,#1a70d0 60%);border-radius:50%"></div><div class="a" style="left:50px;top:398.6px;width:10px;height:0.9px;background:#76a8e0;"></div><div class="a" style="left:65.5px;top:390.5px;width:6px;height:6px;background:linear-gradient(#f0f0f0 30%,#d04040 30% 50%,#40a040 50% 70%,#3070d0 70%);border-radius:1px"></div><div class="a" style="left:79.5px;top:390.5px;width:6px;height:6px;background:linear-gradient(#e8b820 40%,#f0d060 40%);border-radius:1px"></div><div class="a" style="left:77.5px;top:398.6px;width:10px;height:0.9px;background:#76a8e0;"></div><div class="a" style="left:92px;top:390.5px;width:6px;height:6px;background:linear-gradient(#3a8ad0,#1a6ab0);border-radius:1px"></div><div class="a" style="left:106.7px;top:390.5px;width:6px;height:6px;background:linear-gradient(#e0e8f0 30%,#3a7ac0 30%);border-radius:1px"></div><div class="a" style="left:104.7px;top:398.6px;width:10px;height:0.9px;background:#76a8e0;"></div><div class="a" style="left:120px;top:390.5px;width:6px;height:6px;background:linear-gradient(#2a5ab0,#6ab0f0);border-radius:40%"></div><div class="a" style="left:134px;top:390.5px;width:6px;height:6px;background:linear-gradient(#a0a0a0,#606060);border-radius:40%"></div><div class="a" style="left:147.8px;top:390.5px;width:6px;height:6px;background:radial-gradient(#8ad0f0,#2a7ad0);border-radius:50%"></div><div class="a" style="left:161.7px;top:390.5px;width:6px;height:6px;background:linear-gradient(#9090a0,#505060);border-radius:1px"></div><div class="a" style="left:175.6px;top:390.5px;width:6px;height:6px;background:linear-gradient(#2aa0e0 60%,#d0d0d0 60%);border-radius:1px"></div><div class="a" style="left:189.5px;top:390.5px;width:6px;height:6px;background:linear-gradient(#2a7ad0,#fff 50%,#2a7ad0);border-radius:1px"></div><div class="a" style="left:187.5px;top:398.6px;width:10px;height:0.9px;background:#76a8e0;"></div><div class="a" style="left:203px;top:390.5px;width:6px;height:6px;background:linear-gradient(#3a7ae0,#2a5ac0);border-radius:1px"></div><div class="a" style="left:216px;top:390.5px;width:6px;height:6px;background:linear-gradient(#30a040,#f0c030);border-radius:1px"></div><div class="a" style="left:230px;top:390.5px;width:6px;height:6px;background:linear-gradient(#b0c0e0,#e0e0e0);border-radius:1px"></div><div class="a" style="left:228px;top:398.6px;width:10px;height:0.9px;background:#76a8e0;"></div><div class="a" style="left:244px;top:390.5px;width:6px;height:6px;background:linear-gradient(#e0e0e0,#909090);border-radius:1px"></div><div class="a" style="left:258px;top:390.5px;width:6px;height:6px;background:linear-gradient(135deg,#d03030,#30a030);border-radius:1px"></div><div class="a" style="left:256px;top:398.6px;width:10px;height:0.9px;background:#76a8e0;"></div><div class="t" style="left:599px;top:389.6px;font-size:4.2px;color:#e8e8e8;">4&#176;C</div><div class="t" style="left:595px;top:395.2px;font-size:4.2px;color:#e8e8e8;">CPU</div><svg class="a" style="left:603.5px;top:394px" width="10" height="5" viewBox="0 0 10 5"><path d="M0.3 0.5 H4 M0.6 2 H3.8 M0.3 4.5 H4.2 M2 0.3 V4.5 M5.5 0.6 H9.5 M6 0.6 V4.6 M6.5 2.2 H9 M7 3.3 L9.2 4.7" stroke="#e8e8e8" stroke-width="0.5" fill="none"/></svg><svg class="a" style="left:620px;top:392px" width="5" height="3"><path d="M0.5 2.5 L2.5 0.5 L4.5 2.5" stroke="#ddd" stroke-width="0.6" fill="none"/></svg><div class="a" style="left:629px;top:390.8px;width:5.5px;height:5.5px;background:#e8f0f8;border:0.8px solid #3a8ad0"></div><svg class="a" style="left:638.5px;top:390.5px" width="5" height="5"><path d="M2.5 0.5 L4.7 4.5 H0.3Z" stroke="#ddd" stroke-width="0.6" fill="none"/></svg><div class="a" style="left:647px;top:391px;width:3px;height:4px;background:#ddd;border-radius:1px"></div><div class="a" style="left:650px;top:393.5px;width:2.5px;height:2.5px;background:#e03030;border-radius:50%"></div><svg class="a" style="left:655.5px;top:390.5px" width="5" height="6" viewBox="0 0 5 6"><path d="M0.5 1.8 H4.5 V4 H0.5Z M2.5 0.2 V5.8" stroke="#eee" stroke-width="0.7" fill="none"/></svg><div class="a" style="left:665px;top:390.6px;width:5.5px;height:6px;background:#e8571e;border-radius:1px"></div><div class="t" style="left:676px;top:392.4px;font-size:4.3px;color:#ddd;">17:04</div><svg class="a" style="left:698px;top:390.5px" width="6" height="6"><path d="M0.5 0.5 H5.5 V4.5 H2 L0.5 5.8Z" fill="#eee"/></svg><div class="a" style="left:0px;top:16px;width:77px;height:146px;background:#fff;"></div><div class="a" style="left:76px;top:16px;width:1px;height:146px;background:#c8c8c8;"></div><div class="a" style="left:0;top:16px;width:9.5px;height:146px;background:linear-gradient(90deg,#cfcfcf,#e6e6e6 40%,#f2f2f2 70%,#e4e4e4)"></div><div class="a" style="left:9px;top:33.4px;width:67px;height:8.4px;background:#efefef;"></div><div class="a" style="left:9px;top:59.8px;width:66.5px;height:8px;background:#f5d6d8;"></div><div class="t" style="left:11px;top:19.3px;font-size:5.2px;color:#1a1a1a;transform:scaleX(0.93);transform-origin:0 0;"><u>N</u>ew...</div><div class="t" style="left:56px;top:19.3px;font-size:5.2px;color:#8a8a8a;">Ctrl+N</div><div class="t" style="left:11px;top:27.1px;font-size:5.2px;color:#1a1a1a;transform:scaleX(0.93);transform-origin:0 0;"><u>O</u>pen...</div><div class="t" style="left:56px;top:27.1px;font-size:5.2px;color:#8a8a8a;">Ctrl+O</div><div class="t" style="left:11px;top:36.7px;font-size:5.2px;color:#a8a8a8;transform:scaleX(0.93);transform-origin:0 0;"><u>S</u>ave</div><div class="t" style="left:56px;top:36.7px;font-size:5.2px;color:#c4c4c4;">Ctrl+S</div><div class="t" style="left:11px;top:44.9px;font-size:5.2px;color:#1a1a1a;transform:scaleX(0.93);transform-origin:0 0;">Save <u>A</u>s...</div><div class="a" style="left:10px;top:51.5px;width:65px;height:0.5px;background:#e4e4e4;"></div><div class="t" style="left:11px;top:54.5px;font-size:5.2px;color:#1a1a1a;transform:scaleX(0.93);transform-origin:0 0;"><u>I</u>mport</div><div class="t" style="left:11px;top:62.5px;font-size:5.2px;color:#1a1a1a;transform:scaleX(0.93);transform-origin:0 0;"><u>E</u>xport</div><svg class="a" style="left:72px;top:54px" width="3" height="4"><path d="M0 0 L2.5 2 L0 4Z" fill="#222"/></svg><svg class="a" style="left:72px;top:62px" width="3" height="4"><path d="M0 0 L2.5 2 L0 4Z" fill="#e8b8bc"/></svg><div class="a" style="left:10px;top:68px;width:66px;height:1px;background:#333;"></div><div class="t" style="left:11px;top:73.1px;font-size:5.2px;color:#1a1a1a;transform:scaleX(0.93);transform-origin:0 0;"><u>V</u>iewlog...</div><div class="t" style="left:11px;top:80.3px;font-size:5.2px;color:#1a1a1a;transform:scaleX(0.93);transform-origin:0 0;">File Viewer...</div><div class="t" style="left:11px;top:87.9px;font-size:5.2px;color:#1a1a1a;transform:scaleX(0.93);transform-origin:0 0;">Plot Set<u>u</u>p...</div><div class="t" style="left:11px;top:95.9px;font-size:5.2px;color:#1a1a1a;transform:scaleX(0.93);transform-origin:0 0;">Plot Previe<u>w</u>...</div><div class="t" style="left:11px;top:103.7px;font-size:5.2px;color:#1a1a1a;transform:scaleX(0.93);transform-origin:0 0;"><u>P</u>lot...</div><div class="t" style="left:11px;top:111.5px;font-size:5.2px;color:#1a1a1a;transform:scaleX(0.93);transform-origin:0 0;">Capture Canvas Image...</div><div class="a" style="left:10px;top:117.2px;width:66px;height:1px;background:#333;"></div><div class="t" style="left:11px;top:121.1px;font-size:5.2px;color:#1a1a1a;transform:scaleX(0.93);transform-origin:0 0;">Propert<u>i</u>es...</div><div class="t" style="left:11px;top:129.1px;font-size:5.2px;color:#1a1a1a;transform:scaleX(0.93);transform-origin:0 0;">Change Editor...</div><div class="t" style="left:11px;top:137.1px;font-size:5.2px;color:#1a1a1a;transform:scaleX(0.93);transform-origin:0 0;">S<u>c</u>ript...</div><div class="a" style="left:10px;top:143.3px;width:65px;height:0.6px;background:#dcdcdc;"></div><div class="t" style="left:11px;top:147.1px;font-size:5.2px;color:#1a1a1a;transform:scaleX(0.93);transform-origin:0 0;">Recent <u>D</u>esigns</div><svg class="a" style="left:72px;top:146.6px" width="3" height="4"><path d="M0 0 L2.5 2 L0 4Z" fill="#222"/></svg><div class="a" style="left:10px;top:153.3px;width:65px;height:0.6px;background:#dcdcdc;"></div><div class="t" style="left:11px;top:157.1px;font-size:5.2px;color:#1a1a1a;transform:scaleX(0.93);transform-origin:0 0;">E<u>x</u>it</div><div class="a" style="left:2px;top:18px;width:5px;height:5px;background:linear-gradient(#f0c060,#e07020);border-radius:1px"></div><div class="a" style="left:2px;top:26px;width:6px;height:5px;background:linear-gradient(#f0d080 40%,#b07020 40%);border-radius:1px"></div><div class="a" style="left:2px;top:35px;width:6px;height:6px;background:#a8a8a8;"></div><div class="a" style="left:75.5px;top:59px;width:70px;height:75px;background:#fff;"></div><div class="a" style="left:145px;top:59px;width:1px;height:75px;background:#c8c8c8;"></div><div class="a" style="left:75.5px;top:59px;width:3.5px;height:75px;background:linear-gradient(90deg,#d8d8d8,#bcbcbc)"></div><div class="a" style="left:84px;top:85.8px;width:60.5px;height:7.2px;background:#f5d6d8;"></div><div class="t" style="left:86.5px;top:62.5px;font-size:5.2px;color:#1a1a1a;transform:scaleX(0.93);transform-origin:0 0;"><u>L</u>ogic...</div><div class="t" style="left:86.5px;top:70.1px;font-size:5.2px;color:#1a1a1a;transform:scaleX(0.93);transform-origin:0 0;">Netlist w/Properties...</div><div class="a" style="left:84px;top:76.2px;width:61px;height:1px;background:#222;"></div><div class="t" style="left:86.5px;top:80.5px;font-size:5.2px;color:#1a1a1a;transform:scaleX(0.93);transform-origin:0 0;"><u>I</u>DF...</div><div class="t" style="left:86.5px;top:87.7px;font-size:5.2px;color:#1a1a1a;transform:scaleX(0.93);transform-origin:0 0;">I<u>P</u>F...</div><div class="a" style="left:84px;top:94.4px;width:61px;height:0.8px;background:#8a8a8a;"></div><div class="t" style="left:86.5px;top:98.3px;font-size:5.2px;color:#1a1a1a;transform:scaleX(0.93);transform-origin:0 0;"><u>P</u>lacement...</div><div class="a" style="left:84px;top:104.6px;width:61px;height:0.8px;background:#8a8a8a;"></div><div class="t" style="left:86.5px;top:108.5px;font-size:5.2px;color:#1a1a1a;transform:scaleX(0.93);transform-origin:0 0;"><u>S</u>ub-Drawing...</div><div class="a" style="left:84px;top:114.7px;width:61px;height:0.8px;background:#8a8a8a;"></div><div class="t" style="left:86.5px;top:117.9px;font-size:5.2px;color:#1a1a1a;transform:scaleX(0.93);transform-origin:0 0;"><u>L</u>ibraries...</div><div class="a" style="left:84px;top:124.5px;width:61px;height:0.8px;background:#8a8a8a;"></div><div class="t" style="left:86.5px;top:128.5px;font-size:5.2px;color:#1a1a1a;transform:scaleX(0.93);transform-origin:0 0;">Downrev design...</div></body></html>
